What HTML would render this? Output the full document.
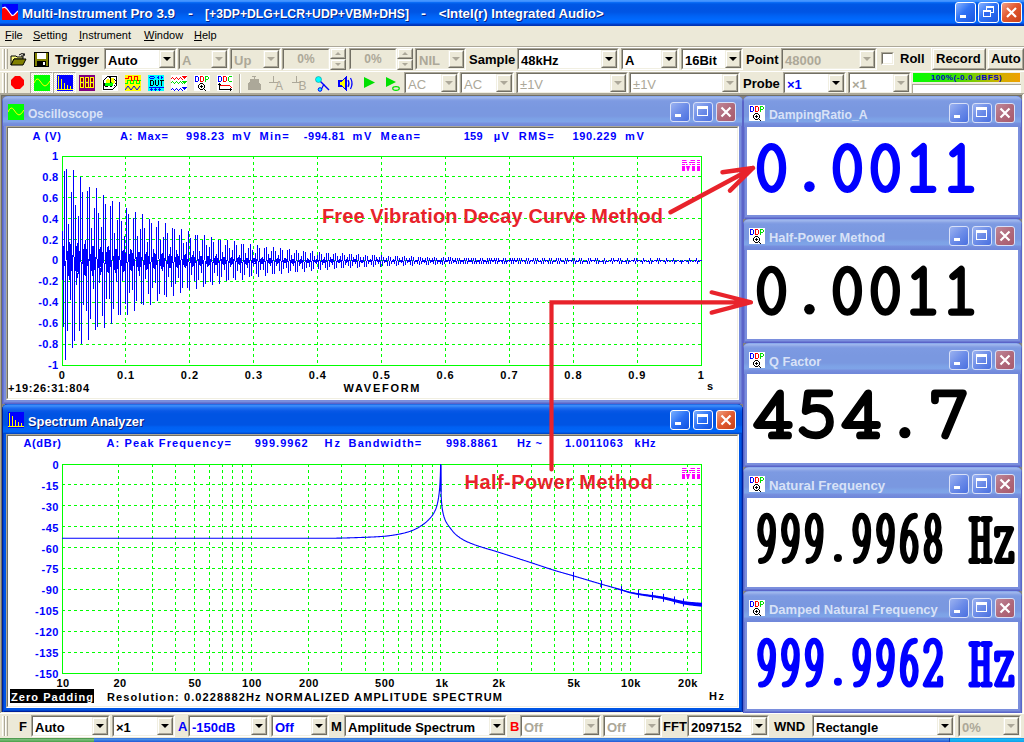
<!DOCTYPE html>
<html><head><meta charset="utf-8"><style>
html,body{margin:0;padding:0;width:1024px;height:742px;overflow:hidden;background:#ECE9D8;font-family:"Liberation Sans",sans-serif;}
</style></head><body><div style="position:relative;width:1024px;height:742px;overflow:hidden;">
<div style="position:absolute;left:0px;top:0px;width:1024px;height:26px;background:linear-gradient(to bottom,#4A9BFF 0px,#3A8CFF 1.5px,#0A6CF5 2.5px,#0058E6 4px,#0054E3 8px,#0055E4 12px,#0062F4 16px,#006AFF 20px,#0066FA 23px,#0040D0 24px,#0030A8 26px);"></div>
<svg style="position:absolute;left:2px;top:4px" width="16" height="16" viewBox="0 0 16 16"><rect width="16" height="16" fill="#0000FF"/><path d="M0 16V4L3 3.2L5 5L8 9L10 11.5L12 11L16 7V16Z" fill="#FF0000"/><path d="M0 4L3 3.2L5 5L8 9L10 11.5L12 11L16 7" stroke="#fff" stroke-width="1.2" fill="none"/></svg>
<svg style="position:absolute;left:0;top:0;overflow:visible" width="1" height="1"><text x="23" y="18.5" font-family="Liberation Sans" font-weight="bold" font-size="13.5" fill="#0A1E80" textLength="153" lengthAdjust="spacingAndGlyphs">Multi-Instrument Pro 3.9</text><text x="22" y="17.5" font-family="Liberation Sans" font-weight="bold" font-size="13.5" fill="#fff" textLength="153" lengthAdjust="spacingAndGlyphs">Multi-Instrument Pro 3.9</text></svg>
<svg style="position:absolute;left:0;top:0;overflow:visible" width="1" height="1"><text x="189" y="18.5" font-family="Liberation Sans" font-weight="bold" font-size="13.5" fill="#0A1E80" textLength="5" lengthAdjust="spacingAndGlyphs">-</text><text x="188" y="17.5" font-family="Liberation Sans" font-weight="bold" font-size="13.5" fill="#fff" textLength="5" lengthAdjust="spacingAndGlyphs">-</text></svg>
<svg style="position:absolute;left:0;top:0;overflow:visible" width="1" height="1"><text x="206" y="18.5" font-family="Liberation Sans" font-weight="bold" font-size="13.5" fill="#0A1E80" textLength="204" lengthAdjust="spacingAndGlyphs">[+3DP+DLG+LCR+UDP+VBM+DHS]</text><text x="205" y="17.5" font-family="Liberation Sans" font-weight="bold" font-size="13.5" fill="#fff" textLength="204" lengthAdjust="spacingAndGlyphs">[+3DP+DLG+LCR+UDP+VBM+DHS]</text></svg>
<svg style="position:absolute;left:0;top:0;overflow:visible" width="1" height="1"><text x="422" y="18.5" font-family="Liberation Sans" font-weight="bold" font-size="13.5" fill="#0A1E80" textLength="5" lengthAdjust="spacingAndGlyphs">-</text><text x="421" y="17.5" font-family="Liberation Sans" font-weight="bold" font-size="13.5" fill="#fff" textLength="5" lengthAdjust="spacingAndGlyphs">-</text></svg>
<svg style="position:absolute;left:0;top:0;overflow:visible" width="1" height="1"><text x="439.7" y="18.5" font-family="Liberation Sans" font-weight="bold" font-size="13.5" fill="#0A1E80" textLength="165" lengthAdjust="spacingAndGlyphs">&lt;Intel(r) Integrated Audio&gt;</text><text x="438.7" y="17.5" font-family="Liberation Sans" font-weight="bold" font-size="13.5" fill="#fff" textLength="165" lengthAdjust="spacingAndGlyphs">&lt;Intel(r) Integrated Audio&gt;</text></svg>
<div style="position:absolute;left:955px;top:2px;width:21px;height:21px;background:linear-gradient(135deg,#8ab4ff 0%,#2f73f5 45%,#1a56e0 100%);border:1px solid #fff;border-radius:3px;box-sizing:border-box;"></div><div style="position:absolute;left:960px;top:15px;width:6px;height:3px;background:#fff;"></div>
<div style="position:absolute;left:978px;top:2px;width:21px;height:21px;background:linear-gradient(135deg,#8ab4ff 0%,#2f73f5 45%,#1a56e0 100%);border:1px solid #fff;border-radius:3px;box-sizing:border-box;"></div><div style="position:absolute;left:986px;top:6px;width:8px;height:7px;border:1px solid #fff;border-top-width:2px;box-sizing:border-box;"></div><div style="position:absolute;left:983px;top:10px;width:8px;height:7px;border:1px solid #fff;border-top-width:2px;box-sizing:border-box;background:#2f6af0;"></div>
<div style="position:absolute;left:1001px;top:2px;width:21px;height:21px;background:linear-gradient(135deg,#f0a08a 0%,#e2582e 45%,#c8401a 100%);border:1px solid #fff;border-radius:3px;box-sizing:border-box;"></div><svg style="position:absolute;left:1001px;top:2px" width="21" height="21"><path d="M6 6L15 15M15 6L6 15" stroke="#fff" stroke-width="2.2"/></svg>
<div style="position:absolute;left:0px;top:26px;width:1024px;height:20px;background:#ECE9D8;"></div>
<div style="position:absolute;left:5px;top:29px;white-space:pre;font:11px 'Liberation Sans',sans-serif;color:#000;line-height:13px;"><u>F</u>ile</div>
<div style="position:absolute;left:33px;top:29px;white-space:pre;font:11px 'Liberation Sans',sans-serif;color:#000;line-height:13px;"><u>S</u>etting</div>
<div style="position:absolute;left:79px;top:29px;white-space:pre;font:11px 'Liberation Sans',sans-serif;color:#000;line-height:13px;"><u>I</u>nstrument</div>
<div style="position:absolute;left:144px;top:29px;white-space:pre;font:11px 'Liberation Sans',sans-serif;color:#000;line-height:13px;"><u>W</u>indow</div>
<div style="position:absolute;left:194px;top:29px;white-space:pre;font:11px 'Liberation Sans',sans-serif;color:#000;line-height:13px;"><u>H</u>elp</div>
<div style="position:absolute;left:0px;top:46px;width:1024px;height:1px;background:#ACA899;"></div>
<div style="position:absolute;left:0px;top:47px;width:1024px;height:1px;background:#fff;"></div>
<div style="position:absolute;left:0px;top:48px;width:1024px;height:23px;background:#ECE9D8;"></div>
<div style="position:absolute;left:2px;top:49px;width:3px;height:20px;border-left:1px solid #fff;border-right:1px solid #ACA899;box-sizing:border-box;"></div><div style="position:absolute;left:5px;top:49px;width:3px;height:20px;border-left:1px solid #fff;border-right:1px solid #ACA899;box-sizing:border-box;"></div>
<svg style="position:absolute;left:10px;top:52px" width="17" height="15" viewBox="0 0 17 15"><path d="M1 4h5l1 1h6v2H4L1 13Z" fill="#FFFF80" stroke="#000" stroke-width="1"/><path d="M1 13L4 7h12l-3 6Z" fill="#808000" stroke="#000" stroke-width="1"/><path d="M9 3Q12 0 15 3" stroke="#000" fill="none"/><path d="M14 1v3h-3" stroke="#000" fill="none"/></svg>
<svg style="position:absolute;left:34px;top:52px" width="15" height="15" viewBox="0 0 15 15"><rect x="0.5" y="0.5" width="14" height="14" fill="#808000" stroke="#000"/><rect x="3" y="1" width="9" height="6" fill="#fff"/><rect x="3" y="9" width="9" height="5" fill="#000"/><rect x="9" y="10" width="2" height="3" fill="#fff"/></svg>
<div style="position:absolute;left:55px;top:52px;white-space:pre;font:bold 13px 'Liberation Sans',sans-serif;color:#000;line-height:15px;">Trigger</div>
<div style="position:absolute;left:104px;top:48px;width:73px;height:22px;background:#fff;border-top:1px solid #ACA899;border-left:1px solid #ACA899;border-right:1px solid #fff;border-bottom:1px solid #fff;box-sizing:border-box;"></div><div style="position:absolute;left:105px;top:49px;width:71px;height:20px;border-top:1px solid #716F64;border-left:1px solid #716F64;border-right:1px solid #F1EFE2;border-bottom:1px solid #F1EFE2;box-sizing:border-box;"></div><div style="position:absolute;left:159px;top:50px;width:16px;height:18px;background:#ECE9D8;border-top:1px solid #F1EFE2;border-left:1px solid #F1EFE2;border-right:1px solid #716F64;border-bottom:1px solid #716F64;box-sizing:border-box;"></div><div style="position:absolute;left:160px;top:51px;width:14px;height:16px;border-top:1px solid #fff;border-left:1px solid #fff;border-right:1px solid #ACA899;border-bottom:1px solid #ACA899;box-sizing:border-box;"></div><div style="position:absolute;left:163px;top:57px;width:0;height:0;border-left:4px solid transparent;border-right:4px solid transparent;border-top:4px solid #000;"></div><div style="position:absolute;left:108px;top:53px;white-space:pre;font:bold 13px 'Liberation Sans',sans-serif;color:#000;line-height:15px;">Auto</div>
<div style="position:absolute;left:178px;top:48px;width:51px;height:22px;background:#ECE9D8;border-top:1px solid #ACA899;border-left:1px solid #ACA899;border-right:1px solid #fff;border-bottom:1px solid #fff;box-sizing:border-box;"></div><div style="position:absolute;left:179px;top:49px;width:49px;height:20px;border-top:1px solid #716F64;border-left:1px solid #716F64;border-right:1px solid #F1EFE2;border-bottom:1px solid #F1EFE2;box-sizing:border-box;"></div><div style="position:absolute;left:211px;top:50px;width:16px;height:18px;background:#ECE9D8;border-top:1px solid #F1EFE2;border-left:1px solid #F1EFE2;border-right:1px solid #716F64;border-bottom:1px solid #716F64;box-sizing:border-box;"></div><div style="position:absolute;left:212px;top:51px;width:14px;height:16px;border-top:1px solid #fff;border-left:1px solid #fff;border-right:1px solid #ACA899;border-bottom:1px solid #ACA899;box-sizing:border-box;"></div><div style="position:absolute;left:215px;top:57px;width:0;height:0;border-left:4px solid transparent;border-right:4px solid transparent;border-top:4px solid #ACA899;"></div><div style="position:absolute;left:182px;top:53px;white-space:pre;font:bold 13px 'Liberation Sans',sans-serif;color:#ACA899;line-height:15px;">A</div>
<div style="position:absolute;left:230px;top:48px;width:51px;height:22px;background:#ECE9D8;border-top:1px solid #ACA899;border-left:1px solid #ACA899;border-right:1px solid #fff;border-bottom:1px solid #fff;box-sizing:border-box;"></div><div style="position:absolute;left:231px;top:49px;width:49px;height:20px;border-top:1px solid #716F64;border-left:1px solid #716F64;border-right:1px solid #F1EFE2;border-bottom:1px solid #F1EFE2;box-sizing:border-box;"></div><div style="position:absolute;left:263px;top:50px;width:16px;height:18px;background:#ECE9D8;border-top:1px solid #F1EFE2;border-left:1px solid #F1EFE2;border-right:1px solid #716F64;border-bottom:1px solid #716F64;box-sizing:border-box;"></div><div style="position:absolute;left:264px;top:51px;width:14px;height:16px;border-top:1px solid #fff;border-left:1px solid #fff;border-right:1px solid #ACA899;border-bottom:1px solid #ACA899;box-sizing:border-box;"></div><div style="position:absolute;left:267px;top:57px;width:0;height:0;border-left:4px solid transparent;border-right:4px solid transparent;border-top:4px solid #ACA899;"></div><div style="position:absolute;left:234px;top:53px;white-space:pre;font:bold 13px 'Liberation Sans',sans-serif;color:#ACA899;line-height:15px;">Up</div>
<div style="position:absolute;left:282px;top:48px;width:48px;height:22px;background:#ECE9D8;border-top:1px solid #ACA899;border-left:1px solid #ACA899;border-right:1px solid #fff;border-bottom:1px solid #fff;box-sizing:border-box;"></div><div style="position:absolute;left:283px;top:49px;width:46px;height:20px;border-top:1px solid #716F64;border-left:1px solid #716F64;border-right:1px solid #F1EFE2;border-bottom:1px solid #F1EFE2;box-sizing:border-box;"></div><div style="position:absolute;left:286px;top:52px;white-space:pre;font:bold 12px 'Liberation Sans',sans-serif;color:#ACA899;line-height:14px;width:40px;text-align:center;">0%</div><div style="position:absolute;left:330px;top:48px;width:16px;height:11px;background:#ECE9D8;border-top:1px solid #F1EFE2;border-left:1px solid #F1EFE2;border-right:1px solid #716F64;border-bottom:1px solid #716F64;box-sizing:border-box;"></div><div style="position:absolute;left:331px;top:49px;width:14px;height:9px;border-top:1px solid #fff;border-left:1px solid #fff;border-right:1px solid #ACA899;border-bottom:1px solid #ACA899;box-sizing:border-box;"></div><div style="position:absolute;left:330px;top:59px;width:16px;height:11px;background:#ECE9D8;border-top:1px solid #F1EFE2;border-left:1px solid #F1EFE2;border-right:1px solid #716F64;border-bottom:1px solid #716F64;box-sizing:border-box;"></div><div style="position:absolute;left:331px;top:60px;width:14px;height:9px;border-top:1px solid #fff;border-left:1px solid #fff;border-right:1px solid #ACA899;border-bottom:1px solid #ACA899;box-sizing:border-box;"></div><div style="position:absolute;left:335px;top:52px;width:0;height:0;border-left:3px solid transparent;border-right:3px solid transparent;border-bottom:3px solid #ACA899;"></div><div style="position:absolute;left:335px;top:63px;width:0px;height:0px;border-left:3px solid transparent;border-right:3px solid transparent;border-top:3px solid #ACA899;"></div>
<div style="position:absolute;left:349px;top:48px;width:48px;height:22px;background:#ECE9D8;border-top:1px solid #ACA899;border-left:1px solid #ACA899;border-right:1px solid #fff;border-bottom:1px solid #fff;box-sizing:border-box;"></div><div style="position:absolute;left:350px;top:49px;width:46px;height:20px;border-top:1px solid #716F64;border-left:1px solid #716F64;border-right:1px solid #F1EFE2;border-bottom:1px solid #F1EFE2;box-sizing:border-box;"></div><div style="position:absolute;left:353px;top:52px;white-space:pre;font:bold 12px 'Liberation Sans',sans-serif;color:#ACA899;line-height:14px;width:40px;text-align:center;">0%</div><div style="position:absolute;left:397px;top:48px;width:16px;height:11px;background:#ECE9D8;border-top:1px solid #F1EFE2;border-left:1px solid #F1EFE2;border-right:1px solid #716F64;border-bottom:1px solid #716F64;box-sizing:border-box;"></div><div style="position:absolute;left:398px;top:49px;width:14px;height:9px;border-top:1px solid #fff;border-left:1px solid #fff;border-right:1px solid #ACA899;border-bottom:1px solid #ACA899;box-sizing:border-box;"></div><div style="position:absolute;left:397px;top:59px;width:16px;height:11px;background:#ECE9D8;border-top:1px solid #F1EFE2;border-left:1px solid #F1EFE2;border-right:1px solid #716F64;border-bottom:1px solid #716F64;box-sizing:border-box;"></div><div style="position:absolute;left:398px;top:60px;width:14px;height:9px;border-top:1px solid #fff;border-left:1px solid #fff;border-right:1px solid #ACA899;border-bottom:1px solid #ACA899;box-sizing:border-box;"></div><div style="position:absolute;left:402px;top:52px;width:0;height:0;border-left:3px solid transparent;border-right:3px solid transparent;border-bottom:3px solid #ACA899;"></div><div style="position:absolute;left:402px;top:63px;width:0px;height:0px;border-left:3px solid transparent;border-right:3px solid transparent;border-top:3px solid #ACA899;"></div>
<div style="position:absolute;left:415px;top:48px;width:51px;height:22px;background:#ECE9D8;border-top:1px solid #ACA899;border-left:1px solid #ACA899;border-right:1px solid #fff;border-bottom:1px solid #fff;box-sizing:border-box;"></div><div style="position:absolute;left:416px;top:49px;width:49px;height:20px;border-top:1px solid #716F64;border-left:1px solid #716F64;border-right:1px solid #F1EFE2;border-bottom:1px solid #F1EFE2;box-sizing:border-box;"></div><div style="position:absolute;left:448px;top:50px;width:16px;height:18px;background:#ECE9D8;border-top:1px solid #F1EFE2;border-left:1px solid #F1EFE2;border-right:1px solid #716F64;border-bottom:1px solid #716F64;box-sizing:border-box;"></div><div style="position:absolute;left:449px;top:51px;width:14px;height:16px;border-top:1px solid #fff;border-left:1px solid #fff;border-right:1px solid #ACA899;border-bottom:1px solid #ACA899;box-sizing:border-box;"></div><div style="position:absolute;left:452px;top:57px;width:0;height:0;border-left:4px solid transparent;border-right:4px solid transparent;border-top:4px solid #ACA899;"></div><div style="position:absolute;left:419px;top:53px;white-space:pre;font:bold 13px 'Liberation Sans',sans-serif;color:#ACA899;line-height:15px;">NIL</div>
<div style="position:absolute;left:469px;top:52px;white-space:pre;font:bold 13px 'Liberation Sans',sans-serif;color:#000;line-height:15px;">Sample</div>
<div style="position:absolute;left:517px;top:48px;width:102px;height:22px;background:#fff;border-top:1px solid #ACA899;border-left:1px solid #ACA899;border-right:1px solid #fff;border-bottom:1px solid #fff;box-sizing:border-box;"></div><div style="position:absolute;left:518px;top:49px;width:100px;height:20px;border-top:1px solid #716F64;border-left:1px solid #716F64;border-right:1px solid #F1EFE2;border-bottom:1px solid #F1EFE2;box-sizing:border-box;"></div><div style="position:absolute;left:601px;top:50px;width:16px;height:18px;background:#ECE9D8;border-top:1px solid #F1EFE2;border-left:1px solid #F1EFE2;border-right:1px solid #716F64;border-bottom:1px solid #716F64;box-sizing:border-box;"></div><div style="position:absolute;left:602px;top:51px;width:14px;height:16px;border-top:1px solid #fff;border-left:1px solid #fff;border-right:1px solid #ACA899;border-bottom:1px solid #ACA899;box-sizing:border-box;"></div><div style="position:absolute;left:605px;top:57px;width:0;height:0;border-left:4px solid transparent;border-right:4px solid transparent;border-top:4px solid #000;"></div><div style="position:absolute;left:521px;top:53px;white-space:pre;font:bold 13px 'Liberation Sans',sans-serif;color:#000;line-height:15px;">48kHz</div>
<div style="position:absolute;left:621px;top:48px;width:58px;height:22px;background:#fff;border-top:1px solid #ACA899;border-left:1px solid #ACA899;border-right:1px solid #fff;border-bottom:1px solid #fff;box-sizing:border-box;"></div><div style="position:absolute;left:622px;top:49px;width:56px;height:20px;border-top:1px solid #716F64;border-left:1px solid #716F64;border-right:1px solid #F1EFE2;border-bottom:1px solid #F1EFE2;box-sizing:border-box;"></div><div style="position:absolute;left:661px;top:50px;width:16px;height:18px;background:#ECE9D8;border-top:1px solid #F1EFE2;border-left:1px solid #F1EFE2;border-right:1px solid #716F64;border-bottom:1px solid #716F64;box-sizing:border-box;"></div><div style="position:absolute;left:662px;top:51px;width:14px;height:16px;border-top:1px solid #fff;border-left:1px solid #fff;border-right:1px solid #ACA899;border-bottom:1px solid #ACA899;box-sizing:border-box;"></div><div style="position:absolute;left:665px;top:57px;width:0;height:0;border-left:4px solid transparent;border-right:4px solid transparent;border-top:4px solid #000;"></div><div style="position:absolute;left:625px;top:53px;white-space:pre;font:bold 13px 'Liberation Sans',sans-serif;color:#000;line-height:15px;">A</div>
<div style="position:absolute;left:681px;top:48px;width:62px;height:22px;background:#fff;border-top:1px solid #ACA899;border-left:1px solid #ACA899;border-right:1px solid #fff;border-bottom:1px solid #fff;box-sizing:border-box;"></div><div style="position:absolute;left:682px;top:49px;width:60px;height:20px;border-top:1px solid #716F64;border-left:1px solid #716F64;border-right:1px solid #F1EFE2;border-bottom:1px solid #F1EFE2;box-sizing:border-box;"></div><div style="position:absolute;left:725px;top:50px;width:16px;height:18px;background:#ECE9D8;border-top:1px solid #F1EFE2;border-left:1px solid #F1EFE2;border-right:1px solid #716F64;border-bottom:1px solid #716F64;box-sizing:border-box;"></div><div style="position:absolute;left:726px;top:51px;width:14px;height:16px;border-top:1px solid #fff;border-left:1px solid #fff;border-right:1px solid #ACA899;border-bottom:1px solid #ACA899;box-sizing:border-box;"></div><div style="position:absolute;left:729px;top:57px;width:0;height:0;border-left:4px solid transparent;border-right:4px solid transparent;border-top:4px solid #000;"></div><div style="position:absolute;left:685px;top:53px;white-space:pre;font:bold 13px 'Liberation Sans',sans-serif;color:#000;line-height:15px;">16Bit</div>
<div style="position:absolute;left:746px;top:52px;white-space:pre;font:bold 13px 'Liberation Sans',sans-serif;color:#000;line-height:15px;">Point</div>
<div style="position:absolute;left:781px;top:48px;width:96px;height:22px;background:#ECE9D8;border-top:1px solid #ACA899;border-left:1px solid #ACA899;border-right:1px solid #fff;border-bottom:1px solid #fff;box-sizing:border-box;"></div><div style="position:absolute;left:782px;top:49px;width:94px;height:20px;border-top:1px solid #716F64;border-left:1px solid #716F64;border-right:1px solid #F1EFE2;border-bottom:1px solid #F1EFE2;box-sizing:border-box;"></div><div style="position:absolute;left:859px;top:50px;width:16px;height:18px;background:#ECE9D8;border-top:1px solid #F1EFE2;border-left:1px solid #F1EFE2;border-right:1px solid #716F64;border-bottom:1px solid #716F64;box-sizing:border-box;"></div><div style="position:absolute;left:860px;top:51px;width:14px;height:16px;border-top:1px solid #fff;border-left:1px solid #fff;border-right:1px solid #ACA899;border-bottom:1px solid #ACA899;box-sizing:border-box;"></div><div style="position:absolute;left:863px;top:57px;width:0;height:0;border-left:4px solid transparent;border-right:4px solid transparent;border-top:4px solid #ACA899;"></div><div style="position:absolute;left:785px;top:53px;white-space:pre;font:bold 13px 'Liberation Sans',sans-serif;color:#ACA899;line-height:15px;">48000</div>
<div style="position:absolute;left:879px;top:48px;width:53px;height:22px;border-right:1px solid #fff;box-sizing:border-box;"></div>
<div style="position:absolute;left:881px;top:52px;width:13px;height:13px;background:#fff;border-top:1px solid #ACA899;border-left:1px solid #ACA899;border-right:1px solid #fff;border-bottom:1px solid #fff;box-sizing:border-box;"></div><div style="position:absolute;left:882px;top:53px;width:11px;height:11px;border-top:1px solid #716F64;border-left:1px solid #716F64;border-right:1px solid #F1EFE2;border-bottom:1px solid #F1EFE2;box-sizing:border-box;"></div>
<div style="position:absolute;left:900px;top:51px;white-space:pre;font:bold 13px 'Liberation Sans',sans-serif;color:#000;line-height:15px;">Roll</div>
<div style="position:absolute;left:932px;top:48px;width:54px;height:22px;background:#ECE9D8;border-top:1px solid #F1EFE2;border-left:1px solid #F1EFE2;border-right:1px solid #716F64;border-bottom:1px solid #716F64;box-sizing:border-box;"></div><div style="position:absolute;left:933px;top:49px;width:52px;height:20px;border-top:1px solid #fff;border-left:1px solid #fff;border-right:1px solid #ACA899;border-bottom:1px solid #ACA899;box-sizing:border-box;"></div>
<div style="position:absolute;left:936px;top:51px;white-space:pre;font:bold 13px 'Liberation Sans',sans-serif;color:#000;line-height:15px;">Record</div>
<div style="position:absolute;left:987px;top:48px;width:37px;height:22px;background:#ECE9D8;border-top:1px solid #F1EFE2;border-left:1px solid #F1EFE2;border-right:1px solid #716F64;border-bottom:1px solid #716F64;box-sizing:border-box;"></div><div style="position:absolute;left:988px;top:49px;width:35px;height:20px;border-top:1px solid #fff;border-left:1px solid #fff;border-right:1px solid #ACA899;border-bottom:1px solid #ACA899;box-sizing:border-box;"></div>
<div style="position:absolute;left:991px;top:51px;white-space:pre;font:bold 13px 'Liberation Sans',sans-serif;color:#000;line-height:15px;">Auto</div>
<div style="position:absolute;left:0px;top:71px;width:1024px;height:23px;background:#ECE9D8;border-top:1px solid #fff;box-sizing:border-box;"></div>
<div style="position:absolute;left:2px;top:73px;width:3px;height:20px;border-left:1px solid #fff;border-right:1px solid #ACA899;box-sizing:border-box;"></div><div style="position:absolute;left:5px;top:73px;width:3px;height:20px;border-left:1px solid #fff;border-right:1px solid #ACA899;box-sizing:border-box;"></div>
<svg style="position:absolute;left:11px;top:76px;" width="13" height="13" viewBox="0 0 13 13" shape-rendering="crispEdges"><path d="M4 0h5l4 4v5l-4 4H4L0 9V4Z" fill="#FF0000" shape-rendering="geometricPrecision"/></svg>
<div style="position:absolute;left:30px;top:72px;width:23px;height:22px;background:repeating-conic-gradient(#fff 0 25%,#ECE9D8 0 50%) 0 0/2px 2px;border-top:1px solid #ACA899;border-left:1px solid #ACA899;border-right:1px solid #fff;border-bottom:1px solid #fff;box-sizing:border-box;"></div>
<div style="position:absolute;left:53px;top:72px;width:23px;height:22px;background:repeating-conic-gradient(#fff 0 25%,#ECE9D8 0 50%) 0 0/2px 2px;border-top:1px solid #ACA899;border-left:1px solid #ACA899;border-right:1px solid #fff;border-bottom:1px solid #fff;box-sizing:border-box;"></div>
<svg style="position:absolute;left:34px;top:75px;" width="16" height="16" viewBox="0 0 16 16" shape-rendering="crispEdges"><rect width="16" height="16" fill="#00FF00"/><path d="M0 8Q3 1 6 6T11 11T16 6" stroke="#FFFF00" fill="none" stroke-width="1" shape-rendering="geometricPrecision"/></svg>
<svg style="position:absolute;left:57px;top:75px;" width="16" height="16" viewBox="0 0 16 16" shape-rendering="crispEdges"><rect width="16" height="16" fill="#0000FF"/><g fill="#FFFF00"><rect x="1" y="1" width="1" height="14"/><rect x="4" y="4" width="1" height="11"/><rect x="7" y="8" width="1" height="7"/><rect x="10" y="10" width="1" height="5"/><rect x="13" y="11" width="1" height="4"/><rect x="0" y="14" width="16" height="1"/></g></svg>
<svg style="position:absolute;left:79px;top:75px;" width="16" height="16" viewBox="0 0 16 16" shape-rendering="crispEdges"><rect width="16" height="16" fill="#800080"/><g fill="#8B0000"><rect x="2" y="3" width="2" height="3"/><rect x="2" y="9" width="2" height="3"/><rect x="7" y="3" width="2" height="3"/><rect x="7" y="9" width="2" height="3"/><rect x="12" y="3" width="2" height="3"/><rect x="12" y="9" width="2" height="3"/></g><g fill="none" stroke="#FFFF00" stroke-width="1"><path d="M1.5 2.5h3v10h-3zM1.5 7.5h3M6.5 2.5h3v10h-3zM6.5 7.5h3M11.5 2.5h3v10h-3zM11.5 7.5h3"/></g><rect x="10" y="12" width="1" height="1" fill="#FFFF00"/></svg>
<svg style="position:absolute;left:102px;top:75px;" width="16" height="16" viewBox="0 0 16 16" shape-rendering="crispEdges"><rect width="16" height="16" fill="#fff"/><rect x="4" y="5" width="4" height="3" fill="#FFFF00"/><rect x="5" y="4" width="2" height="1" fill="#FFFF00"/><rect x="9" y="3" width="3" height="5" fill="#FFFF00"/><rect x="12" y="6" width="1" height="2" fill="#FFFF00"/><rect x="10" y="8" width="2" height="1" fill="#FFFF00"/><rect x="3" y="8" width="8" height="3" fill="#00FF00"/><rect x="8" y="7" width="2" height="1" fill="#00FF00"/><rect x="5" y="1" width="10" height="1" fill="#000"/><rect x="14" y="1" width="1" height="10" fill="#000"/><rect x="13" y="11" width="1" height="1" fill="#000"/><rect x="12" y="12" width="1" height="1" fill="#000"/><rect x="11" y="13" width="1" height="1" fill="#000"/><rect x="1" y="14" width="10" height="1" fill="#000"/><rect x="1" y="5" width="1" height="10" fill="#000"/><rect x="2" y="4" width="1" height="1" fill="#000"/><rect x="3" y="3" width="1" height="1" fill="#000"/><rect x="4" y="2" width="1" height="1" fill="#000"/><rect x="8" y="2" width="1" height="6" fill="#000"/><rect x="7" y="2" width="1" height="1" fill="#000"/><rect x="12" y="4" width="1" height="1" fill="#000"/><rect x="13" y="5" width="1" height="1" fill="#000"/><rect x="13" y="8" width="1" height="1" fill="#000"/><rect x="12" y="10" width="1" height="1" fill="#000"/><rect x="3" y="11" width="3" height="1" fill="#000"/><rect x="8" y="11" width="2" height="1" fill="#000"/><rect x="2" y="8" width="1" height="3" fill="#000"/></svg>
<svg style="position:absolute;left:125px;top:75px;" width="16" height="16" viewBox="0 0 16 16" shape-rendering="crispEdges"><rect width="16" height="16" fill="#FFFF00"/><path d="M0 3.5h3v-2h3v4h3v-4h3v4h4" stroke="#FF0000" fill="none"/><path d="M0 8.5h2v-3h3v3h3v-3h3v3h3v-3h2" stroke="#00FF00" fill="none"/><path d="M0 15L3 11L6 15L9 11L12 15L15 11" stroke="#0000FF" fill="none" shape-rendering="geometricPrecision"/></svg>
<svg style="position:absolute;left:148px;top:75px;" width="16" height="16" viewBox="0 0 16 16" shape-rendering="crispEdges"><rect width="16" height="16" fill="#00FFFF"/><g shape-rendering="crispEdges" fill="#0000FF"><path d="M2 1h4v1H2zM1 2h1v1H1zM6 2h1v1H6zM2 3h4v1H2zM10 1h1v3h-1zM9 2h1v1H9zM13 1h1v3h-1zM14 2h1v1h-1zM1 12h15v1H1zM3 13h1v3H3zM7 13h1v3H7zM11 13h1v3h-1zM2 14h1v1H2zM4 14h1v1H4zM6 14h1v1H6zM8 14h1v1H8zM10 14h1v1h-1zM12 14h1v1h-1z"/></g><g shape-rendering="crispEdges" fill="#000"><path d="M2 5h3v1H2zM2 10h3v1H2zM2 5h1v6H2zM5 6h1v4H5zM7 5h1v5H7zM10 5h1v5h-1zM8 10h2v1H8zM12 5h4v1h-4zM13 6h1v5h-1z"/></g></svg>
<svg style="position:absolute;left:171px;top:75px;" width="16" height="16" viewBox="0 0 16 16" shape-rendering="crispEdges"><rect width="16" height="16" fill="#fff"/><g shape-rendering="crispEdges"><path d="M0 3h1v1H0zM1 2h1v1H1zM2 3h1v1H2zM3 4h1v1H3zM4 3h1v1H4zM5 2h1v1H5zM6 3h1v1H6zM7 4h1v1H7zM8 3h1v1H8zM9 2h1v1H9zM10 3h1v1h-1zM11 4h1v1h-1zM11 1h5v1h-5zM12 2h3v1h-3zM13 3h1v1h-1z" fill="#FF0000"/><path d="M0 7h1v1H0zM1 6h1v1H1zM2 7h1v1H2zM3 8h1v1H3zM4 7h1v1H4zM5 6h1v1H5zM6 7h1v1H6zM7 8h1v1H7zM8 7h1v1H8zM9 6h1v1H9zM10 7h1v1h-1zM11 8h1v1h-1zM11 6h5v1h-5zM12 7h3v1h-3zM13 8h1v1h-1z" fill="#00E000"/><path transform="translate(0,1)" d="M0 13h1v1H0zM1 12h1v1H1zM2 13h1v1H2zM3 14h1v1H3zM4 13h1v1H4zM5 12h1v1H5zM6 13h1v1H6zM7 14h1v1H7zM8 13h1v1H8zM9 12h1v1H9zM10 13h1v1h-1zM11 14h1v1h-1zM11 11h5v1h-5zM12 12h3v1h-3zM13 13h1v1h-1z" fill="#0000FF"/></g></svg>
<svg style="position:absolute;left:194px;top:75px;" width="16" height="16" viewBox="0 0 16 16" shape-rendering="crispEdges"><rect width="16" height="16" fill="#fff"/><g shape-rendering="crispEdges"><path d="M1 1h3v1H1zM1 6h3v1H1zM1 1h1v6H1zM4 2h1v4H4z" fill="#0000FF"/><path d="M6 1h3v1H6zM6 6h3v1H6zM6 1h1v6H6zM9 2h1v4H9z" fill="#FF0000"/><path d="M11 1h3v1h-3zM11 4h3v1h-3zM11 1h1v6h-1zM14 2h1v2h-1z" fill="#00E000"/><path d="M6 8h3v1H6zM6 14h3v1H6zM5 9h1v1H5zM9 9h1v1H9zM5 13h1v1H5zM9 13h1v1H9zM4 10h1v3H4zM10 10h1v3h-1zM7 10h1v3H7zM6 11h3v1H6zM10 14h1v1h-1zM11 15h1v1h-1z" fill="#000"/></g></svg>
<svg style="position:absolute;left:217px;top:75px;" width="16" height="16" viewBox="0 0 16 16" shape-rendering="crispEdges"><rect width="16" height="16" fill="#fff"/><g shape-rendering="crispEdges"><path d="M1 1h3v1H1zM1 6h3v1H1zM1 1h1v6H1zM4 2h1v4H4z" fill="#0000FF"/><path d="M6 1h3v1H6zM6 6h3v1H6zM6 1h1v6H6zM9 2h1v4H9z" fill="#FF0000"/><path d="M12 1h3v1h-3zM12 6h3v1h-3zM11 2h1v4h-1z" fill="#00E000"/><path d="M2 8h1v7H2zM1 9h3v1H1zM2 14h13v1H2zM13 13h1v3h-1z" fill="#000"/><path d="M3 10h10v1H3zM13 11h1v1h-1zM14 12h1v1h-1z" fill="#FF0000"/></g></svg>
<div style="position:absolute;left:239px;top:74px;width:2px;height:19px;border-left:1px solid #ACA899;border-right:1px solid #fff;box-sizing:border-box;"></div>
<svg style="position:absolute;left:247px;top:75px;" width="14" height="16" viewBox="0 0 14 16" shape-rendering="crispEdges"><path d="M5 1h4M7 1v3M3 4h8v3l2 2v5H1V9l2-2Z" fill="#ACA899" stroke="#ACA899"/></svg>
<svg style="position:absolute;left:268px;top:75px;" width="17" height="16" viewBox="0 0 17 16" shape-rendering="crispEdges"><path d="M5.5 1v6M1 7.5h9" stroke="#ACA899" stroke-width="1.6"/><text x="7" y="15" font-family="Liberation Sans" font-size="12" fill="#ACA899">A</text></svg>
<svg style="position:absolute;left:291px;top:75px;" width="17" height="16" viewBox="0 0 17 16" shape-rendering="crispEdges"><path d="M5.5 1v6M1 7.5h9" stroke="#ACA899" stroke-width="1.6"/><text x="7.5" y="15" font-family="Liberation Sans" font-size="12" fill="#ACA899">B</text></svg>
<svg style="position:absolute;left:315px;top:76px;" width="16" height="16" viewBox="0 0 16 16" shape-rendering="crispEdges"><g shape-rendering="geometricPrecision"><path d="M3 3L14 14" stroke="#0000FF" stroke-width="1.4"/><path d="M9 8L6 14" stroke="#0000FF" stroke-width="1.2"/><circle cx="3.5" cy="3.5" r="3" fill="#00FFFF" stroke="#008080" stroke-width=".5"/><circle cx="5" cy="13.5" r="1.8" fill="#00FFFF" stroke="#0000FF"/></g></svg>
<svg style="position:absolute;left:338px;top:75px;" width="17" height="17" viewBox="0 0 17 17" shape-rendering="crispEdges"><path d="M1 6h3l4-4v13l-4-4H1Z" fill="#FFFF00" stroke="#0000FF" stroke-width="1.2"/><g fill="none" stroke="#0000FF" stroke-width="1.2" shape-rendering="geometricPrecision"><path d="M10 5Q12 8.5 10 12"/><path d="M12.5 3Q15.5 8.5 12.5 14"/></g></svg>
<svg style="position:absolute;left:364px;top:77px;" width="11" height="11" viewBox="0 0 11 11" shape-rendering="crispEdges"><path d="M0 0L11 5.5L0 11Z" fill="#00E000" shape-rendering="geometricPrecision"/></svg>
<svg style="position:absolute;left:386px;top:77px;" width="14" height="14" viewBox="0 0 14 14" shape-rendering="crispEdges"><path d="M0 0L10 5L0 10Z" fill="#00E000" shape-rendering="geometricPrecision"/><ellipse cx="10" cy="11.5" rx="3.3" ry="1.8" fill="none" stroke="#00E000" stroke-width="1.2" shape-rendering="geometricPrecision"/></svg>
<div style="position:absolute;left:404px;top:72px;width:55px;height:22px;background:#fff;border-top:1px solid #ACA899;border-left:1px solid #ACA899;border-right:1px solid #fff;border-bottom:1px solid #fff;box-sizing:border-box;"></div><div style="position:absolute;left:405px;top:73px;width:53px;height:20px;border-top:1px solid #716F64;border-left:1px solid #716F64;border-right:1px solid #F1EFE2;border-bottom:1px solid #F1EFE2;box-sizing:border-box;"></div><div style="position:absolute;left:441px;top:74px;width:16px;height:18px;background:#ECE9D8;border-top:1px solid #F1EFE2;border-left:1px solid #F1EFE2;border-right:1px solid #716F64;border-bottom:1px solid #716F64;box-sizing:border-box;"></div><div style="position:absolute;left:442px;top:75px;width:14px;height:16px;border-top:1px solid #fff;border-left:1px solid #fff;border-right:1px solid #ACA899;border-bottom:1px solid #ACA899;box-sizing:border-box;"></div><div style="position:absolute;left:445px;top:81px;width:0;height:0;border-left:4px solid transparent;border-right:4px solid transparent;border-top:4px solid #ACA899;"></div><div style="position:absolute;left:408px;top:77px;white-space:pre;font:13px 'Liberation Sans',sans-serif;color:#ACA899;line-height:15px;">AC</div>
<div style="position:absolute;left:460px;top:72px;width:54px;height:22px;background:#fff;border-top:1px solid #ACA899;border-left:1px solid #ACA899;border-right:1px solid #fff;border-bottom:1px solid #fff;box-sizing:border-box;"></div><div style="position:absolute;left:461px;top:73px;width:52px;height:20px;border-top:1px solid #716F64;border-left:1px solid #716F64;border-right:1px solid #F1EFE2;border-bottom:1px solid #F1EFE2;box-sizing:border-box;"></div><div style="position:absolute;left:496px;top:74px;width:16px;height:18px;background:#ECE9D8;border-top:1px solid #F1EFE2;border-left:1px solid #F1EFE2;border-right:1px solid #716F64;border-bottom:1px solid #716F64;box-sizing:border-box;"></div><div style="position:absolute;left:497px;top:75px;width:14px;height:16px;border-top:1px solid #fff;border-left:1px solid #fff;border-right:1px solid #ACA899;border-bottom:1px solid #ACA899;box-sizing:border-box;"></div><div style="position:absolute;left:500px;top:81px;width:0;height:0;border-left:4px solid transparent;border-right:4px solid transparent;border-top:4px solid #ACA899;"></div><div style="position:absolute;left:464px;top:77px;white-space:pre;font:13px 'Liberation Sans',sans-serif;color:#ACA899;line-height:15px;">AC</div>
<div style="position:absolute;left:516px;top:72px;width:112px;height:22px;background:#fff;border-top:1px solid #ACA899;border-left:1px solid #ACA899;border-right:1px solid #fff;border-bottom:1px solid #fff;box-sizing:border-box;"></div><div style="position:absolute;left:517px;top:73px;width:110px;height:20px;border-top:1px solid #716F64;border-left:1px solid #716F64;border-right:1px solid #F1EFE2;border-bottom:1px solid #F1EFE2;box-sizing:border-box;"></div><div style="position:absolute;left:610px;top:74px;width:16px;height:18px;background:#ECE9D8;border-top:1px solid #F1EFE2;border-left:1px solid #F1EFE2;border-right:1px solid #716F64;border-bottom:1px solid #716F64;box-sizing:border-box;"></div><div style="position:absolute;left:611px;top:75px;width:14px;height:16px;border-top:1px solid #fff;border-left:1px solid #fff;border-right:1px solid #ACA899;border-bottom:1px solid #ACA899;box-sizing:border-box;"></div><div style="position:absolute;left:614px;top:81px;width:0;height:0;border-left:4px solid transparent;border-right:4px solid transparent;border-top:4px solid #ACA899;"></div><div style="position:absolute;left:520px;top:77px;white-space:pre;font:13px 'Liberation Sans',sans-serif;color:#ACA899;line-height:15px;">±1V</div>
<div style="position:absolute;left:629px;top:72px;width:111px;height:22px;background:#fff;border-top:1px solid #ACA899;border-left:1px solid #ACA899;border-right:1px solid #fff;border-bottom:1px solid #fff;box-sizing:border-box;"></div><div style="position:absolute;left:630px;top:73px;width:109px;height:20px;border-top:1px solid #716F64;border-left:1px solid #716F64;border-right:1px solid #F1EFE2;border-bottom:1px solid #F1EFE2;box-sizing:border-box;"></div><div style="position:absolute;left:722px;top:74px;width:16px;height:18px;background:#ECE9D8;border-top:1px solid #F1EFE2;border-left:1px solid #F1EFE2;border-right:1px solid #716F64;border-bottom:1px solid #716F64;box-sizing:border-box;"></div><div style="position:absolute;left:723px;top:75px;width:14px;height:16px;border-top:1px solid #fff;border-left:1px solid #fff;border-right:1px solid #ACA899;border-bottom:1px solid #ACA899;box-sizing:border-box;"></div><div style="position:absolute;left:726px;top:81px;width:0;height:0;border-left:4px solid transparent;border-right:4px solid transparent;border-top:4px solid #ACA899;"></div><div style="position:absolute;left:633px;top:77px;white-space:pre;font:13px 'Liberation Sans',sans-serif;color:#ACA899;line-height:15px;">±1V</div>
<div style="position:absolute;left:743px;top:76px;white-space:pre;font:bold 13px 'Liberation Sans',sans-serif;color:#000;line-height:15px;">Probe</div>
<div style="position:absolute;left:783px;top:72px;width:63px;height:22px;background:#fff;border-top:1px solid #ACA899;border-left:1px solid #ACA899;border-right:1px solid #fff;border-bottom:1px solid #fff;box-sizing:border-box;"></div><div style="position:absolute;left:784px;top:73px;width:61px;height:20px;border-top:1px solid #716F64;border-left:1px solid #716F64;border-right:1px solid #F1EFE2;border-bottom:1px solid #F1EFE2;box-sizing:border-box;"></div><div style="position:absolute;left:828px;top:74px;width:16px;height:18px;background:#ECE9D8;border-top:1px solid #F1EFE2;border-left:1px solid #F1EFE2;border-right:1px solid #716F64;border-bottom:1px solid #716F64;box-sizing:border-box;"></div><div style="position:absolute;left:829px;top:75px;width:14px;height:16px;border-top:1px solid #fff;border-left:1px solid #fff;border-right:1px solid #ACA899;border-bottom:1px solid #ACA899;box-sizing:border-box;"></div><div style="position:absolute;left:832px;top:81px;width:0;height:0;border-left:4px solid transparent;border-right:4px solid transparent;border-top:4px solid #000;"></div><div style="position:absolute;left:787px;top:77px;white-space:pre;font:bold 13px 'Liberation Sans',sans-serif;color:#0000FF;line-height:15px;">×1</div>
<div style="position:absolute;left:848px;top:72px;width:63px;height:22px;background:#fff;border-top:1px solid #ACA899;border-left:1px solid #ACA899;border-right:1px solid #fff;border-bottom:1px solid #fff;box-sizing:border-box;"></div><div style="position:absolute;left:849px;top:73px;width:61px;height:20px;border-top:1px solid #716F64;border-left:1px solid #716F64;border-right:1px solid #F1EFE2;border-bottom:1px solid #F1EFE2;box-sizing:border-box;"></div><div style="position:absolute;left:893px;top:74px;width:16px;height:18px;background:#ECE9D8;border-top:1px solid #F1EFE2;border-left:1px solid #F1EFE2;border-right:1px solid #716F64;border-bottom:1px solid #716F64;box-sizing:border-box;"></div><div style="position:absolute;left:894px;top:75px;width:14px;height:16px;border-top:1px solid #fff;border-left:1px solid #fff;border-right:1px solid #ACA899;border-bottom:1px solid #ACA899;box-sizing:border-box;"></div><div style="position:absolute;left:897px;top:81px;width:0;height:0;border-left:4px solid transparent;border-right:4px solid transparent;border-top:4px solid #ACA899;"></div><div style="position:absolute;left:852px;top:77px;white-space:pre;font:bold 13px 'Liberation Sans',sans-serif;color:#ACA899;line-height:15px;">×1</div>
<div style="position:absolute;left:912px;top:72px;width:109px;height:11px;background:linear-gradient(to right,#00FF00 0%,#40E000 40%,#D0B000 80%,#F0A000 100%);border:1px solid #F1EFE2;box-sizing:border-box;"></div>
<div style="position:absolute;left:912px;top:72px;white-space:pre;width:109px;text-align:center;font:bold 8px 'Liberation Sans',sans-serif;color:#0000CC;line-height:11px;letter-spacing:0.6px;">100%(-0.0 dBFS)</div>
<div style="position:absolute;left:912px;top:84px;width:109px;height:10px;background:#fff;border-top:1px solid #ACA899;border-left:1px solid #ACA899;box-sizing:border-box;"></div>
<div style="position:absolute;left:0px;top:93px;width:1024px;height:1px;background:#ACA899;"></div>
<div style="position:absolute;left:0px;top:94px;width:1024px;height:620px;background:#808080;"></div>
<div style="position:absolute;left:0px;top:94px;width:1024px;height:1px;background:#ACA899;"></div>
<div style="position:absolute;left:0px;top:95px;width:1024px;height:1px;background:#716F64;"></div>
<div style="position:absolute;left:0px;top:94px;width:1px;height:620px;background:#ACA899;"></div>
<div style="position:absolute;left:1px;top:95px;width:1px;height:618px;background:#716F64;"></div>
<div style="position:absolute;left:1023px;top:94px;width:1px;height:620px;background:#fff;"></div>
<div style="position:absolute;left:1022px;top:95px;width:1px;height:618px;background:#F1EFE2;"></div>
<div style="position:absolute;left:0px;top:713px;width:1024px;height:1px;background:#fff;"></div>
<div style="position:absolute;left:1px;top:712px;width:1022px;height:1px;background:#F1EFE2;"></div>
<div style="position:absolute;left:2px;top:96px;width:741px;height:308px;background:#7A8EDD;border-radius:6px 6px 0 0;box-shadow:inset 1px 0 0 #5A64C8,inset 2px 0 0 #6A78D2,inset -1px 0 0 #5A64C8,inset -2px 0 0 #6A78D2,inset 0 -1px 0 #5A64C8,inset 0 -2px 0 #6A78D2;overflow:hidden;"><div style="position:absolute;left:0px;top:0px;width:741px;height:30px;background:linear-gradient(to bottom,#7AA0EE 0px,#9DB5EC 1px,#9DB5EC 2px,#8CA6E6 3px,#7D9AE2 5px,#7A98E0 12px,#7A98E0 20px,#7DA2E6 23px,#7FA4E8 26px,#7890DE 27px,#7088DA 30px);box-shadow:inset 1px 0 0 #5A64C8,inset -1px 0 0 #5A64C8;"></div></div><svg style="position:absolute;left:8px;top:104px;" width="16" height="16" viewBox="0 0 16 16" shape-rendering="crispEdges"><rect width="16" height="16" fill="#00FF00"/><path d="M0 8Q3 1 6 6T11 11T16 6" stroke="#FFFF00" fill="none" stroke-width="1" shape-rendering="geometricPrecision"/></svg><svg style="position:absolute;left:0;top:0;overflow:visible" width="1" height="1"><text x="28" y="118" font-family="Liberation Sans" font-weight="bold" font-size="13.5" fill="#D8E2F7" textLength="75" lengthAdjust="spacingAndGlyphs">Oscilloscope</text></svg><div style="position:absolute;left:670px;top:102px;width:20px;height:20px;background:linear-gradient(135deg,#9BB2F0 0%,#6C8CE8 50%,#4A70E0 100%);border:1px solid #D8E0F8;border-radius:3px;box-sizing:border-box;"></div><div style="position:absolute;left:675px;top:114px;width:6px;height:3px;background:#fff;"></div><div style="position:absolute;left:693px;top:102px;width:20px;height:20px;background:linear-gradient(135deg,#9BB2F0 0%,#6C8CE8 50%,#4A70E0 100%);border:1px solid #D8E0F8;border-radius:3px;box-sizing:border-box;"></div><div style="position:absolute;left:697px;top:106px;width:11px;height:10px;border:1px solid #fff;border-top-width:3px;box-sizing:border-box;"></div><div style="position:absolute;left:716px;top:102px;width:20px;height:20px;background:linear-gradient(135deg,#C08898 0%,#B06A7C 50%,#A85A6C 100%);border:1px solid #D8E0F8;border-radius:3px;box-sizing:border-box;"></div><svg style="position:absolute;left:716px;top:102px" width="20" height="20"><path d="M5.5 5.5L14.5 14.5M14.5 5.5L5.5 14.5" stroke="#fff" stroke-width="2.2"/></svg>
<div style="position:absolute;left:6px;top:126px;width:733px;height:274px;background:#fff;border-top:1px solid #ACA899;border-left:1px solid #ACA899;border-right:1px solid #fff;border-bottom:1px solid #fff;box-sizing:border-box;"></div><div style="position:absolute;left:7px;top:127px;width:731px;height:272px;border-top:1px solid #716F64;border-left:1px solid #716F64;border-right:1px solid #F1EFE2;border-bottom:1px solid #F1EFE2;box-sizing:border-box;"></div>
<div style="position:absolute;left:2px;top:404px;width:741px;height:308px;background:#0055E5;border-radius:6px 6px 0 0;box-shadow:inset 1px 0 0 #00209A,inset 2px 0 0 #0044CC,inset -1px 0 0 #00209A,inset -2px 0 0 #0044CC,inset 0 -1px 0 #00209A,inset 0 -2px 0 #0044CC;overflow:hidden;"><div style="position:absolute;left:0px;top:0px;width:741px;height:30px;background:linear-gradient(to bottom,#0A50D8 0px,#3B8CF8 1px,#3B8CF8 2px,#1F6EF0 4px,#0858E6 7px,#0054E3 10px,#0054E3 21px,#0060F2 23px,#0066F8 28px,#0050D8 29px,#0040B8 30px);box-shadow:inset 1px 0 0 #00209A,inset -1px 0 0 #00209A;"></div></div><svg style="position:absolute;left:8px;top:412px;" width="16" height="16" viewBox="0 0 16 16" shape-rendering="crispEdges"><rect width="16" height="16" fill="#0000FF"/><g fill="#FFFF00"><rect x="1" y="1" width="1" height="14"/><rect x="4" y="4" width="1" height="11"/><rect x="7" y="8" width="1" height="7"/><rect x="10" y="10" width="1" height="5"/><rect x="13" y="11" width="1" height="4"/><rect x="0" y="14" width="16" height="1"/></g></svg><svg style="position:absolute;left:0;top:0;overflow:visible" width="1" height="1"><text x="29" y="427" font-family="Liberation Sans" font-weight="bold" font-size="13.5" fill="#0A1878" textLength="116" lengthAdjust="spacingAndGlyphs">Spectrum Analyzer</text><text x="28" y="426" font-family="Liberation Sans" font-weight="bold" font-size="13.5" fill="#fff" textLength="116" lengthAdjust="spacingAndGlyphs">Spectrum Analyzer</text></svg><div style="position:absolute;left:670px;top:410px;width:20px;height:20px;background:linear-gradient(135deg,#7AB0FF 0%,#2A70F5 50%,#1050E0 100%);border:1px solid #fff;border-radius:3px;box-sizing:border-box;"></div><div style="position:absolute;left:675px;top:422px;width:6px;height:3px;background:#fff;"></div><div style="position:absolute;left:693px;top:410px;width:20px;height:20px;background:linear-gradient(135deg,#7AB0FF 0%,#2A70F5 50%,#1050E0 100%);border:1px solid #fff;border-radius:3px;box-sizing:border-box;"></div><div style="position:absolute;left:697px;top:414px;width:11px;height:10px;border:1px solid #fff;border-top-width:3px;box-sizing:border-box;"></div><div style="position:absolute;left:716px;top:410px;width:20px;height:20px;background:linear-gradient(135deg,#F0A080 0%,#E05A30 50%,#C84018 100%);border:1px solid #fff;border-radius:3px;box-sizing:border-box;"></div><svg style="position:absolute;left:716px;top:410px" width="20" height="20"><path d="M5.5 5.5L14.5 14.5M14.5 5.5L5.5 14.5" stroke="#fff" stroke-width="2.2"/></svg>
<div style="position:absolute;left:6px;top:434px;width:733px;height:274px;background:#fff;border-top:1px solid #ACA899;border-left:1px solid #ACA899;border-right:1px solid #fff;border-bottom:1px solid #fff;box-sizing:border-box;"></div><div style="position:absolute;left:7px;top:435px;width:731px;height:272px;border-top:1px solid #716F64;border-left:1px solid #716F64;border-right:1px solid #F1EFE2;border-bottom:1px solid #F1EFE2;box-sizing:border-box;"></div>
<div style="position:absolute;left:743px;top:96px;width:279px;height:123px;background:#7A8EDD;border-radius:6px 6px 0 0;box-shadow:inset 1px 0 0 #5A64C8,inset 2px 0 0 #6A78D2,inset -1px 0 0 #5A64C8,inset -2px 0 0 #6A78D2,inset 0 -1px 0 #5A64C8,inset 0 -2px 0 #6A78D2;overflow:hidden;"><div style="position:absolute;left:0px;top:0px;width:279px;height:31px;background:linear-gradient(to bottom,#7AA0EE 0px,#9DB5EC 1px,#9DB5EC 2px,#8CA6E6 3px,#7D9AE2 5px,#7A98E0 12px,#7A98E0 20px,#7DA2E6 23px,#7FA4E8 26px,#7890DE 27px,#7088DA 30px);box-shadow:inset 1px 0 0 #5A64C8,inset -1px 0 0 #5A64C8;"></div></div><svg style="position:absolute;left:749px;top:105px;" width="16" height="16" viewBox="0 0 16 16" shape-rendering="crispEdges"><rect width="16" height="16" fill="#fff"/><g shape-rendering="crispEdges"><path d="M1 1h3v1H1zM1 6h3v1H1zM1 1h1v6H1zM4 2h1v4H4z" fill="#0000FF"/><path d="M6 1h3v1H6zM6 6h3v1H6zM6 1h1v6H6zM9 2h1v4H9z" fill="#FF0000"/><path d="M11 1h3v1h-3zM11 4h3v1h-3zM11 1h1v6h-1zM14 2h1v2h-1z" fill="#00E000"/><path d="M6 8h3v1H6zM6 14h3v1H6zM5 9h1v1H5zM9 9h1v1H9zM5 13h1v1H5zM9 13h1v1H9zM4 10h1v3H4zM10 10h1v3h-1zM7 10h1v3H7zM6 11h3v1H6zM10 14h1v1h-1zM11 15h1v1h-1z" fill="#000"/></g></svg><svg style="position:absolute;left:0;top:0;overflow:visible" width="1" height="1"><text x="769" y="119" font-family="Liberation Sans" font-weight="bold" font-size="13.5" fill="#D8E2F7" textLength="98.6" lengthAdjust="spacingAndGlyphs">DampingRatio_A</text></svg><div style="position:absolute;left:949px;top:103px;width:20px;height:20px;background:linear-gradient(135deg,#9BB2F0 0%,#6C8CE8 50%,#4A70E0 100%);border:1px solid #D8E0F8;border-radius:3px;box-sizing:border-box;"></div><div style="position:absolute;left:954px;top:115px;width:6px;height:3px;background:#fff;"></div><div style="position:absolute;left:972px;top:103px;width:20px;height:20px;background:linear-gradient(135deg,#9BB2F0 0%,#6C8CE8 50%,#4A70E0 100%);border:1px solid #D8E0F8;border-radius:3px;box-sizing:border-box;"></div><div style="position:absolute;left:976px;top:107px;width:11px;height:10px;border:1px solid #fff;border-top-width:3px;box-sizing:border-box;"></div><div style="position:absolute;left:995px;top:103px;width:20px;height:20px;background:linear-gradient(135deg,#C08898 0%,#B06A7C 50%,#A85A6C 100%);border:1px solid #D8E0F8;border-radius:3px;box-sizing:border-box;"></div><svg style="position:absolute;left:995px;top:103px" width="20" height="20"><path d="M5.5 5.5L14.5 14.5M14.5 5.5L5.5 14.5" stroke="#fff" stroke-width="2.2"/></svg>
<div style="position:absolute;left:747px;top:127px;width:271px;height:88px;background:#fff;"></div>
<div style="position:absolute;left:743px;top:219px;width:279px;height:124px;background:#7A8EDD;border-radius:6px 6px 0 0;box-shadow:inset 1px 0 0 #5A64C8,inset 2px 0 0 #6A78D2,inset -1px 0 0 #5A64C8,inset -2px 0 0 #6A78D2,inset 0 -1px 0 #5A64C8,inset 0 -2px 0 #6A78D2;overflow:hidden;"><div style="position:absolute;left:0px;top:0px;width:279px;height:31px;background:linear-gradient(to bottom,#7AA0EE 0px,#9DB5EC 1px,#9DB5EC 2px,#8CA6E6 3px,#7D9AE2 5px,#7A98E0 12px,#7A98E0 20px,#7DA2E6 23px,#7FA4E8 26px,#7890DE 27px,#7088DA 30px);box-shadow:inset 1px 0 0 #5A64C8,inset -1px 0 0 #5A64C8;"></div></div><svg style="position:absolute;left:749px;top:228px;" width="16" height="16" viewBox="0 0 16 16" shape-rendering="crispEdges"><rect width="16" height="16" fill="#fff"/><g shape-rendering="crispEdges"><path d="M1 1h3v1H1zM1 6h3v1H1zM1 1h1v6H1zM4 2h1v4H4z" fill="#0000FF"/><path d="M6 1h3v1H6zM6 6h3v1H6zM6 1h1v6H6zM9 2h1v4H9z" fill="#FF0000"/><path d="M11 1h3v1h-3zM11 4h3v1h-3zM11 1h1v6h-1zM14 2h1v2h-1z" fill="#00E000"/><path d="M6 8h3v1H6zM6 14h3v1H6zM5 9h1v1H5zM9 9h1v1H9zM5 13h1v1H5zM9 13h1v1H9zM4 10h1v3H4zM10 10h1v3h-1zM7 10h1v3H7zM6 11h3v1H6zM10 14h1v1h-1zM11 15h1v1h-1z" fill="#000"/></g></svg><svg style="position:absolute;left:0;top:0;overflow:visible" width="1" height="1"><text x="769" y="242" font-family="Liberation Sans" font-weight="bold" font-size="13.5" fill="#D8E2F7" textLength="116.2" lengthAdjust="spacingAndGlyphs">Half-Power Method</text></svg><div style="position:absolute;left:949px;top:226px;width:20px;height:20px;background:linear-gradient(135deg,#9BB2F0 0%,#6C8CE8 50%,#4A70E0 100%);border:1px solid #D8E0F8;border-radius:3px;box-sizing:border-box;"></div><div style="position:absolute;left:954px;top:238px;width:6px;height:3px;background:#fff;"></div><div style="position:absolute;left:972px;top:226px;width:20px;height:20px;background:linear-gradient(135deg,#9BB2F0 0%,#6C8CE8 50%,#4A70E0 100%);border:1px solid #D8E0F8;border-radius:3px;box-sizing:border-box;"></div><div style="position:absolute;left:976px;top:230px;width:11px;height:10px;border:1px solid #fff;border-top-width:3px;box-sizing:border-box;"></div><div style="position:absolute;left:995px;top:226px;width:20px;height:20px;background:linear-gradient(135deg,#C08898 0%,#B06A7C 50%,#A85A6C 100%);border:1px solid #D8E0F8;border-radius:3px;box-sizing:border-box;"></div><svg style="position:absolute;left:995px;top:226px" width="20" height="20"><path d="M5.5 5.5L14.5 14.5M14.5 5.5L5.5 14.5" stroke="#fff" stroke-width="2.2"/></svg>
<div style="position:absolute;left:747px;top:250px;width:271px;height:89px;background:#fff;"></div>
<div style="position:absolute;left:743px;top:343px;width:279px;height:124px;background:#7A8EDD;border-radius:6px 6px 0 0;box-shadow:inset 1px 0 0 #5A64C8,inset 2px 0 0 #6A78D2,inset -1px 0 0 #5A64C8,inset -2px 0 0 #6A78D2,inset 0 -1px 0 #5A64C8,inset 0 -2px 0 #6A78D2;overflow:hidden;"><div style="position:absolute;left:0px;top:0px;width:279px;height:31px;background:linear-gradient(to bottom,#7AA0EE 0px,#9DB5EC 1px,#9DB5EC 2px,#8CA6E6 3px,#7D9AE2 5px,#7A98E0 12px,#7A98E0 20px,#7DA2E6 23px,#7FA4E8 26px,#7890DE 27px,#7088DA 30px);box-shadow:inset 1px 0 0 #5A64C8,inset -1px 0 0 #5A64C8;"></div></div><svg style="position:absolute;left:749px;top:352px;" width="16" height="16" viewBox="0 0 16 16" shape-rendering="crispEdges"><rect width="16" height="16" fill="#fff"/><g shape-rendering="crispEdges"><path d="M1 1h3v1H1zM1 6h3v1H1zM1 1h1v6H1zM4 2h1v4H4z" fill="#0000FF"/><path d="M6 1h3v1H6zM6 6h3v1H6zM6 1h1v6H6zM9 2h1v4H9z" fill="#FF0000"/><path d="M11 1h3v1h-3zM11 4h3v1h-3zM11 1h1v6h-1zM14 2h1v2h-1z" fill="#00E000"/><path d="M6 8h3v1H6zM6 14h3v1H6zM5 9h1v1H5zM9 9h1v1H9zM5 13h1v1H5zM9 13h1v1H9zM4 10h1v3H4zM10 10h1v3h-1zM7 10h1v3H7zM6 11h3v1H6zM10 14h1v1h-1zM11 15h1v1h-1z" fill="#000"/></g></svg><svg style="position:absolute;left:0;top:0;overflow:visible" width="1" height="1"><text x="769" y="366" font-family="Liberation Sans" font-weight="bold" font-size="13.5" fill="#D8E2F7" textLength="52.2" lengthAdjust="spacingAndGlyphs">Q Factor</text></svg><div style="position:absolute;left:949px;top:350px;width:20px;height:20px;background:linear-gradient(135deg,#9BB2F0 0%,#6C8CE8 50%,#4A70E0 100%);border:1px solid #D8E0F8;border-radius:3px;box-sizing:border-box;"></div><div style="position:absolute;left:954px;top:362px;width:6px;height:3px;background:#fff;"></div><div style="position:absolute;left:972px;top:350px;width:20px;height:20px;background:linear-gradient(135deg,#9BB2F0 0%,#6C8CE8 50%,#4A70E0 100%);border:1px solid #D8E0F8;border-radius:3px;box-sizing:border-box;"></div><div style="position:absolute;left:976px;top:354px;width:11px;height:10px;border:1px solid #fff;border-top-width:3px;box-sizing:border-box;"></div><div style="position:absolute;left:995px;top:350px;width:20px;height:20px;background:linear-gradient(135deg,#C08898 0%,#B06A7C 50%,#A85A6C 100%);border:1px solid #D8E0F8;border-radius:3px;box-sizing:border-box;"></div><svg style="position:absolute;left:995px;top:350px" width="20" height="20"><path d="M5.5 5.5L14.5 14.5M14.5 5.5L5.5 14.5" stroke="#fff" stroke-width="2.2"/></svg>
<div style="position:absolute;left:747px;top:374px;width:271px;height:89px;background:#fff;"></div>
<div style="position:absolute;left:743px;top:467px;width:279px;height:124px;background:#7A8EDD;border-radius:6px 6px 0 0;box-shadow:inset 1px 0 0 #5A64C8,inset 2px 0 0 #6A78D2,inset -1px 0 0 #5A64C8,inset -2px 0 0 #6A78D2,inset 0 -1px 0 #5A64C8,inset 0 -2px 0 #6A78D2;overflow:hidden;"><div style="position:absolute;left:0px;top:0px;width:279px;height:31px;background:linear-gradient(to bottom,#7AA0EE 0px,#9DB5EC 1px,#9DB5EC 2px,#8CA6E6 3px,#7D9AE2 5px,#7A98E0 12px,#7A98E0 20px,#7DA2E6 23px,#7FA4E8 26px,#7890DE 27px,#7088DA 30px);box-shadow:inset 1px 0 0 #5A64C8,inset -1px 0 0 #5A64C8;"></div></div><svg style="position:absolute;left:749px;top:476px;" width="16" height="16" viewBox="0 0 16 16" shape-rendering="crispEdges"><rect width="16" height="16" fill="#fff"/><g shape-rendering="crispEdges"><path d="M1 1h3v1H1zM1 6h3v1H1zM1 1h1v6H1zM4 2h1v4H4z" fill="#0000FF"/><path d="M6 1h3v1H6zM6 6h3v1H6zM6 1h1v6H6zM9 2h1v4H9z" fill="#FF0000"/><path d="M11 1h3v1h-3zM11 4h3v1h-3zM11 1h1v6h-1zM14 2h1v2h-1z" fill="#00E000"/><path d="M6 8h3v1H6zM6 14h3v1H6zM5 9h1v1H5zM9 9h1v1H9zM5 13h1v1H5zM9 13h1v1H9zM4 10h1v3H4zM10 10h1v3h-1zM7 10h1v3H7zM6 11h3v1H6zM10 14h1v1h-1zM11 15h1v1h-1z" fill="#000"/></g></svg><svg style="position:absolute;left:0;top:0;overflow:visible" width="1" height="1"><text x="769" y="490" font-family="Liberation Sans" font-weight="bold" font-size="13.5" fill="#D8E2F7" textLength="116.1" lengthAdjust="spacingAndGlyphs">Natural Frequency</text></svg><div style="position:absolute;left:949px;top:474px;width:20px;height:20px;background:linear-gradient(135deg,#9BB2F0 0%,#6C8CE8 50%,#4A70E0 100%);border:1px solid #D8E0F8;border-radius:3px;box-sizing:border-box;"></div><div style="position:absolute;left:954px;top:486px;width:6px;height:3px;background:#fff;"></div><div style="position:absolute;left:972px;top:474px;width:20px;height:20px;background:linear-gradient(135deg,#9BB2F0 0%,#6C8CE8 50%,#4A70E0 100%);border:1px solid #D8E0F8;border-radius:3px;box-sizing:border-box;"></div><div style="position:absolute;left:976px;top:478px;width:11px;height:10px;border:1px solid #fff;border-top-width:3px;box-sizing:border-box;"></div><div style="position:absolute;left:995px;top:474px;width:20px;height:20px;background:linear-gradient(135deg,#C08898 0%,#B06A7C 50%,#A85A6C 100%);border:1px solid #D8E0F8;border-radius:3px;box-sizing:border-box;"></div><svg style="position:absolute;left:995px;top:474px" width="20" height="20"><path d="M5.5 5.5L14.5 14.5M14.5 5.5L5.5 14.5" stroke="#fff" stroke-width="2.2"/></svg>
<div style="position:absolute;left:747px;top:498px;width:271px;height:89px;background:#fff;"></div>
<div style="position:absolute;left:743px;top:591px;width:279px;height:122px;background:#7A8EDD;border-radius:6px 6px 0 0;box-shadow:inset 1px 0 0 #5A64C8,inset 2px 0 0 #6A78D2,inset -1px 0 0 #5A64C8,inset -2px 0 0 #6A78D2,inset 0 -1px 0 #5A64C8,inset 0 -2px 0 #6A78D2;overflow:hidden;"><div style="position:absolute;left:0px;top:0px;width:279px;height:31px;background:linear-gradient(to bottom,#7AA0EE 0px,#9DB5EC 1px,#9DB5EC 2px,#8CA6E6 3px,#7D9AE2 5px,#7A98E0 12px,#7A98E0 20px,#7DA2E6 23px,#7FA4E8 26px,#7890DE 27px,#7088DA 30px);box-shadow:inset 1px 0 0 #5A64C8,inset -1px 0 0 #5A64C8;"></div></div><svg style="position:absolute;left:749px;top:600px;" width="16" height="16" viewBox="0 0 16 16" shape-rendering="crispEdges"><rect width="16" height="16" fill="#fff"/><g shape-rendering="crispEdges"><path d="M1 1h3v1H1zM1 6h3v1H1zM1 1h1v6H1zM4 2h1v4H4z" fill="#0000FF"/><path d="M6 1h3v1H6zM6 6h3v1H6zM6 1h1v6H6zM9 2h1v4H9z" fill="#FF0000"/><path d="M11 1h3v1h-3zM11 4h3v1h-3zM11 1h1v6h-1zM14 2h1v2h-1z" fill="#00E000"/><path d="M6 8h3v1H6zM6 14h3v1H6zM5 9h1v1H5zM9 9h1v1H9zM5 13h1v1H5zM9 13h1v1H9zM4 10h1v3H4zM10 10h1v3h-1zM7 10h1v3H7zM6 11h3v1H6zM10 14h1v1h-1zM11 15h1v1h-1z" fill="#000"/></g></svg><svg style="position:absolute;left:0;top:0;overflow:visible" width="1" height="1"><text x="769" y="614" font-family="Liberation Sans" font-weight="bold" font-size="13.5" fill="#D8E2F7" textLength="168.8" lengthAdjust="spacingAndGlyphs">Damped Natural Frequency</text></svg><div style="position:absolute;left:949px;top:598px;width:20px;height:20px;background:linear-gradient(135deg,#9BB2F0 0%,#6C8CE8 50%,#4A70E0 100%);border:1px solid #D8E0F8;border-radius:3px;box-sizing:border-box;"></div><div style="position:absolute;left:954px;top:610px;width:6px;height:3px;background:#fff;"></div><div style="position:absolute;left:972px;top:598px;width:20px;height:20px;background:linear-gradient(135deg,#9BB2F0 0%,#6C8CE8 50%,#4A70E0 100%);border:1px solid #D8E0F8;border-radius:3px;box-sizing:border-box;"></div><div style="position:absolute;left:976px;top:602px;width:11px;height:10px;border:1px solid #fff;border-top-width:3px;box-sizing:border-box;"></div><div style="position:absolute;left:995px;top:598px;width:20px;height:20px;background:linear-gradient(135deg,#C08898 0%,#B06A7C 50%,#A85A6C 100%);border:1px solid #D8E0F8;border-radius:3px;box-sizing:border-box;"></div><svg style="position:absolute;left:995px;top:598px" width="20" height="20"><path d="M5.5 5.5L14.5 14.5M14.5 5.5L5.5 14.5" stroke="#fff" stroke-width="2.2"/></svg>
<div style="position:absolute;left:747px;top:622px;width:271px;height:87px;background:#fff;"></div>
<svg style="position:absolute;left:8px;top:128px" width="730" height="270" viewBox="8 128 730 270"><path d="M125.5 156V365" stroke="#00FF00" stroke-dasharray="3 3"/><path d="M189.5 156V365" stroke="#00FF00" stroke-dasharray="3 3"/><path d="M253.5 156V365" stroke="#00FF00" stroke-dasharray="3 3"/><path d="M317.5 156V365" stroke="#00FF00" stroke-dasharray="3 3"/><path d="M381.5 156V365" stroke="#00FF00" stroke-dasharray="3 3"/><path d="M445.5 156V365" stroke="#00FF00" stroke-dasharray="3 3"/><path d="M509.5 156V365" stroke="#00FF00" stroke-dasharray="3 3"/><path d="M573.5 156V365" stroke="#00FF00" stroke-dasharray="3 3"/><path d="M637.5 156V365" stroke="#00FF00" stroke-dasharray="3 3"/><path d="M62 176.5H701" stroke="#00FF00" stroke-dasharray="3 3"/><path d="M62 197.5H701" stroke="#00FF00" stroke-dasharray="3 3"/><path d="M62 218.5H701" stroke="#00FF00" stroke-dasharray="3 3"/><path d="M62 239.5H701" stroke="#00FF00" stroke-dasharray="3 3"/><path d="M62 260.5H701" stroke="#00FF00" stroke-dasharray="3 3"/><path d="M62 281.5H701" stroke="#00FF00" stroke-dasharray="3 3"/><path d="M62 302.5H701" stroke="#00FF00" stroke-dasharray="3 3"/><path d="M62 323.5H701" stroke="#00FF00" stroke-dasharray="3 3"/><path d="M62 344.5H701" stroke="#00FF00" stroke-dasharray="3 3"/><rect x="62.5" y="156.5" width="639" height="209" fill="none" stroke="#00FF00"/><path d="M62.5 231.5 L63.5 326.5 L64.5 171.5 L65.5 359.5 L66.5 169.5 L67.5 330.5 L68.5 224.5 L69.5 259.5 L70.5 299.5 L71.5 192.5 L72.5 347.5 L73.5 170.5 L74.5 340.5 L75.5 205.5 L76.5 284.5 L77.5 272.5 L78.5 216.5 L79.5 330.5 L80.5 177.5 L81.5 343.5 L82.5 192.5 L83.5 304.5 L84.5 248.5 L85.5 240.5 L86.5 310.5 L87.5 191.5 L88.5 339.5 L89.5 187.5 L90.5 318.5 L91.5 228.5 L92.5 262.5 L93.5 288.5 L94.5 208.5 L95.5 329.5 L96.5 188.5 L97.5 326.5 L98.5 213.5 L99.5 282.5 L100.5 267.5 L101.5 227.5 L102.5 315.5 L103.5 195.5 L104.5 327.5 L105.5 204.5 L106.5 298.5 L107.5 248.5 L108.5 246.5 L109.5 298.5 L110.5 206.5 L111.5 323.5 L112.5 201.5 L113.5 308.5 L114.5 233.5 L115.5 264.5 L116.5 281.5 L117.5 220.5 L118.5 314.5 L119.5 202.5 L120.5 314.5 L121.5 221.5 L122.5 280.5 L123.5 264.5 L124.5 236.5 L125.5 303.5 L126.5 208.5 L127.5 314.5 L128.5 214.5 L129.5 292.5 L130.5 249.5 L131.5 251.5 L132.5 289.5 L133.5 218.5 L134.5 310.5 L135.5 212.5 L136.5 300.5 L137.5 236.5 L138.5 266.5 L139.5 275.5 L140.5 229.5 L141.5 303.5 L142.5 214.5 L143.5 304.5 L144.5 228.5 L145.5 278.5 L146.5 261.5 L147.5 242.5 L148.5 293.5 L149.5 219.5 L150.5 304.5 L151.5 223.5 L152.5 287.5 L153.5 249.5 L154.5 255.5 L155.5 282.5 L156.5 227.5 L157.5 300.5 L158.5 221.5 L159.5 293.5 L160.5 240.5 L161.5 266.5 L162.5 270.5 L163.5 237.5 L164.5 294.5 L165.5 223.5 L166.5 296.5 L167.5 233.5 L168.5 276.5 L169.5 260.5 L170.5 247.5 L171.5 286.5 L172.5 228.5 L173.5 295.5 L174.5 229.5 L175.5 283.5 L176.5 250.5 L177.5 257.5 L178.5 277.5 L179.5 235.5 L180.5 292.5 L181.5 229.5 L182.5 287.5 L183.5 243.5 L184.5 266.5 L185.5 267.5 L186.5 242.5 L187.5 287.5 L188.5 231.5 L189.5 289.5 L190.5 238.5 L191.5 274.5 L192.5 259.5 L193.5 251.5 L194.5 280.5 L195.5 235.5 L196.5 288.5 L197.5 235.5 L198.5 279.5 L199.5 251.5 L200.5 259.5 L201.5 272.5 L202.5 240.5 L203.5 286.5 L204.5 235.5 L205.5 283.5 L206.5 245.5 L207.5 266.5 L208.5 265.5 L209.5 247.5 L210.5 281.5 L211.5 237.5 L212.5 284.5 L213.5 242.5 L214.5 272.5 L215.5 258.5 L216.5 254.5 L217.5 275.5 L218.5 240.5 L219.5 283.5 L220.5 240.5 L221.5 276.5 L222.5 252.5 L223.5 260.5 L224.5 269.5 L225.5 245.5 L226.5 280.5 L227.5 240.5 L228.5 279.5 L229.5 248.5 L230.5 266.5 L231.5 263.5 L232.5 250.5 L233.5 277.5 L234.5 241.5 L235.5 279.5 L236.5 245.5 L237.5 270.5 L238.5 258.5 L239.5 256.5 L240.5 272.5 L241.5 244.5 L242.5 279.5 L243.5 244.5 L244.5 274.5 L245.5 253.5 L246.5 261.5 L247.5 267.5 L248.5 248.5 L249.5 276.5 L250.5 244.5 L251.5 275.5 L252.5 250.5 L253.5 265.5 L254.5 262.5 L255.5 253.5 L256.5 273.5 L257.5 245.5 L258.5 276.5 L259.5 248.5 L260.5 269.5 L261.5 258.5 L262.5 257.5 L263.5 269.5 L264.5 248.5 L265.5 275.5 L266.5 247.5 L267.5 272.5 L268.5 254.5 L269.5 261.5 L270.5 265.5 L271.5 251.5 L272.5 273.5 L273.5 247.5 L274.5 273.5 L275.5 251.5 L276.5 265.5 L277.5 261.5 L278.5 255.5 L279.5 270.5 L280.5 248.5 L281.5 273.5 L282.5 250.5 L283.5 268.5 L284.5 258.5 L285.5 258.5 L286.5 267.5 L287.5 250.5 L288.5 272.5 L289.5 249.5 L290.5 270.5 L291.5 255.5 L292.5 262.5 L293.5 264.5 L294.5 253.5 L295.5 271.5 L296.5 250.5 L297.5 271.5 L298.5 253.5 L299.5 265.5 L300.5 261.5 L301.5 256.5 L302.5 268.5 L303.5 251.5 L304.5 271.5 L305.5 252.5 L306.5 267.5 L307.5 258.5 L308.5 259.5 L309.5 266.5 L310.5 253.5 L311.5 270.5 L312.5 251.5 L313.5 268.5 L314.5 256.5 L315.5 262.5 L316.5 263.5 L317.5 255.5 L318.5 268.5 L319.5 252.5 L320.5 269.5 L321.5 254.5 L322.5 264.5 L323.5 260.5 L324.5 257.5 L325.5 267.5 L326.5 253.5 L327.5 269.5 L328.5 253.5 L329.5 266.5 L330.5 258.5 L331.5 260.5 L332.5 264.5 L333.5 254.5 L334.5 268.5 L335.5 253.5 L336.5 267.5 L337.5 256.5 L338.5 262.5 L339.5 262.5 L340.5 256.5 L341.5 267.5 L342.5 253.5 L343.5 267.5 L344.5 255.5 L345.5 264.5 L346.5 260.5 L347.5 258.5 L348.5 265.5 L349.5 254.5 L350.5 267.5 L351.5 254.5 L352.5 265.5 L353.5 258.5 L354.5 260.5 L355.5 263.5 L356.5 255.5 L357.5 267.5 L358.5 254.5 L359.5 266.5 L360.5 257.5 L361.5 262.5 L362.5 262.5 L363.5 257.5 L364.5 266.5 L365.5 255.5 L366.5 266.5 L367.5 256.5 L368.5 263.5 L369.5 260.5 L370.5 259.5 L371.5 264.5 L372.5 255.5 L373.5 266.5 L374.5 255.5 L375.5 264.5 L376.5 258.5 L377.5 260.5 L378.5 263.5 L379.5 257.5 L380.5 266.5 L381.5 255.5 L382.5 265.5 L383.5 257.5 L384.5 262.5 L385.5 261.5 L386.5 258.5 L387.5 265.5 L388.5 256.5 L389.5 265.5 L390.5 257.5 L391.5 263.5 L392.5 260.5 L393.5 259.5 L394.5 263.5 L395.5 256.5 L396.5 265.5 L397.5 256.5 L398.5 264.5 L399.5 259.5 L400.5 261.5 L401.5 262.5 L402.5 257.5 L403.5 265.5 L404.5 256.5 L405.5 264.5 L406.5 258.5 L407.5 262.5 L408.5 261.5 L409.5 258.5 L410.5 264.5 L411.5 256.5 L412.5 265.5 L413.5 257.5 L414.5 263.5 L415.5 260.5 L416.5 260.5 L417.5 263.5 L418.5 257.5 L419.5 264.5 L420.5 257.5 L421.5 263.5 L422.5 259.5 L423.5 261.5 L424.5 262.5 L425.5 258.5 L426.5 264.5 L427.5 257.5 L428.5 264.5 L429.5 258.5 L430.5 262.5 L431.5 261.5 L432.5 259.5 L433.5 263.5 L434.5 257.5 L435.5 264.5 L436.5 258.5 L437.5 262.5 L438.5 260.5 L439.5 260.5 L440.5 262.5 L441.5 258.5 L442.5 264.5 L443.5 257.5 L444.5 263.5 L445.5 259.5 L446.5 261.5 L447.5 261.5 L448.5 258.5 L449.5 263.5 L450.5 257.5 L451.5 263.5 L452.5 258.5 L453.5 262.5 L454.5 261.5 L455.5 259.5 L456.5 263.5 L457.5 258.5 L458.5 263.5 L459.5 258.5 L460.5 262.5 L461.5 260.5 L462.5 260.5 L463.5 262.5 L464.5 258.5 L465.5 263.5 L466.5 258.5 L467.5 263.5 L468.5 259.5 L469.5 261.5 L470.5 261.5 L471.5 259.5 L472.5 263.5 L473.5 258.5 L474.5 263.5 L475.5 259.5 L476.5 262.5 L477.5 260.5 L478.5 260.5 L479.5 262.5 L480.5 258.5 L481.5 263.5 L482.5 258.5 L483.5 262.5 L484.5 260.5 L485.5 260.5 L486.5 262.5 L487.5 259.5 L488.5 263.5 L489.5 258.5 L490.5 262.5 L491.5 259.5 L492.5 261.5 L493.5 261.5 L494.5 259.5 L495.5 262.5 L496.5 258.5 L497.5 263.5 L498.5 259.5 L499.5 261.5 L500.5 260.5 L501.5 260.5 L502.5 262.5 L503.5 258.5 L504.5 263.5 L505.5 259.5 L506.5 262.5 L507.5 260.5 L508.5 260.5 L509.5 261.5 L510.5 259.5 L511.5 262.5 L512.5 258.5 L513.5 262.5 L514.5 259.5 L515.5 261.5 L516.5 261.5 L517.5 259.5 L518.5 262.5 L519.5 259.5 L520.5 262.5 L521.5 259.5 L522.5 261.5 L523.5 260.5 L524.5 260.5 L525.5 262.5 L526.5 259.5 L527.5 262.5 L528.5 259.5 L529.5 262.5 L530.5 260.5 L531.5 260.5 L532.5 261.5 L533.5 259.5 L534.5 262.5 L535.5 259.5 L536.5 262.5 L537.5 259.5 L538.5 261.5 L539.5 261.5 L540.5 260.5 L541.5 262.5 L542.5 259.5 L543.5 262.5 L544.5 259.5 L545.5 261.5 L546.5 260.5 L547.5 260.5 L548.5 262.5 L549.5 259.5 L550.5 262.5 L551.5 259.5 L552.5 262.5 L553.5 260.5 L554.5 261.5 L555.5 261.5 L556.5 259.5 L557.5 262.5 L558.5 259.5 L559.5 262.5 L560.5 259.5 L561.5 261.5 L562.5 261.5 L563.5 260.5 L564.5 262.5 L565.5 259.5 L566.5 262.5 L567.5 259.5 L568.5 261.5 L569.5 260.5 L570.5 260.5 L571.5 261.5 L572.5 259.5 L573.5 262.5 L574.5 259.5 L575.5 262.5 L576.5 260.5 L577.5 261.5 L578.5 261.5 L579.5 259.5 L580.5 262.5 L581.5 259.5 L582.5 262.5 L583.5 260.5 L584.5 261.5 L585.5 261.5 L586.5 260.5 L587.5 262.5 L588.5 259.5 L589.5 262.5 L590.5 259.5 L591.5 261.5 L592.5 260.5 L593.5 260.5 L594.5 261.5 L595.5 259.5 L596.5 262.5 L597.5 259.5 L598.5 262.5 L599.5 260.5 L600.5 261.5 L601.5 261.5 L602.5 260.5 L603.5 262.5 L604.5 259.5 L605.5 262.5 L606.5 260.5 L607.5 261.5 L608.5 261.5 L609.5 260.5 L610.5 261.5 L611.5 259.5 L612.5 262.5 L613.5 259.5 L614.5 261.5 L615.5 260.5 L616.5 260.5 L617.5 261.5 L618.5 259.5 L619.5 262.5 L620.5 259.5 L621.5 262.5 L622.5 260.5 L623.5 261.5 L624.5 261.5 L625.5 260.5 L626.5 262.5 L627.5 259.5 L628.5 262.5 L629.5 260.5 L630.5 261.5 L631.5 260.5 L632.5 260.5 L633.5 261.5 L634.5 259.5 L635.5 262.5 L636.5 259.5 L637.5 261.5 L638.5 260.5 L639.5 260.5 L640.5 261.5 L641.5 260.5 L642.5 262.5 L643.5 259.5 L644.5 261.5 L645.5 260.5 L646.5 261.5 L647.5 261.5 L648.5 260.5 L649.5 262.5 L650.5 259.5 L651.5 262.5 L652.5 260.5 L653.5 261.5 L654.5 260.5 L655.5 260.5 L656.5 261.5 L657.5 259.5 L658.5 262.5 L659.5 259.5 L660.5 261.5 L661.5 260.5 L662.5 260.5 L663.5 261.5 L664.5 260.5 L665.5 262.5 L666.5 259.5 L667.5 261.5 L668.5 260.5 L669.5 261.5 L670.5 261.5 L671.5 260.5 L672.5 261.5 L673.5 259.5 L674.5 262.5 L675.5 260.5 L676.5 261.5 L677.5 260.5 L678.5 260.5 L679.5 261.5 L680.5 260.5 L681.5 262.5 L682.5 260.5 L683.5 261.5 L684.5 260.5 L685.5 260.5 L686.5 261.5 L687.5 260.5 L688.5 262.5 L689.5 259.5 L690.5 261.5 L691.5 260.5 L692.5 261.5 L693.5 261.5 L694.5 260.5 L695.5 261.5 L696.5 259.5 L697.5 262.5 L698.5 260.5 L699.5 261.5 L700.5 260.5 L701.5 260.5" stroke="#0000FF" fill="none" stroke-width="1" shape-rendering="crispEdges"/><g transform="translate(682,160)" fill="#FF00FF"><rect x="0" y="0" width="4.5" height="1"/><rect x="8.5" y="0" width="4.5" height="1"/><rect x="15" y="0" width="3" height="1"/><rect x="0" y="2" width="5" height="1"/><rect x="7" y="2" width="6" height="1"/><rect x="15" y="2" width="3" height="1"/><rect x="0" y="4" width="3" height="1"/><rect x="4" y="4" width="1.5" height="1"/><rect x="7.5" y="4" width="1.5" height="1"/><rect x="10" y="4" width="3" height="1"/><rect x="15" y="4" width="3" height="1"/><rect x="0" y="6" width="3" height="5"/><rect x="10" y="6" width="3" height="5"/><rect x="15" y="6" width="3" height="5"/><path d="M4 6H8L6.6 11H5.4Z"/></g><text x="58.5" y="160" font-family="Liberation Sans" font-weight="bold" font-size="11" fill="#0000FF" text-anchor="end" letter-spacing="0.3">1</text><text x="58.5" y="181" font-family="Liberation Sans" font-weight="bold" font-size="11" fill="#0000FF" text-anchor="end" letter-spacing="0.3">0.8</text><text x="58.5" y="202" font-family="Liberation Sans" font-weight="bold" font-size="11" fill="#0000FF" text-anchor="end" letter-spacing="0.3">0.6</text><text x="58.5" y="223" font-family="Liberation Sans" font-weight="bold" font-size="11" fill="#0000FF" text-anchor="end" letter-spacing="0.3">0.4</text><text x="58.5" y="244" font-family="Liberation Sans" font-weight="bold" font-size="11" fill="#0000FF" text-anchor="end" letter-spacing="0.3">0.2</text><text x="58.5" y="264" font-family="Liberation Sans" font-weight="bold" font-size="11" fill="#0000FF" text-anchor="end" letter-spacing="0.3">0</text><text x="58.5" y="285" font-family="Liberation Sans" font-weight="bold" font-size="11" fill="#0000FF" text-anchor="end" letter-spacing="0.3">-0.2</text><text x="58.5" y="306" font-family="Liberation Sans" font-weight="bold" font-size="11" fill="#0000FF" text-anchor="end" letter-spacing="0.3">-0.4</text><text x="58.5" y="327" font-family="Liberation Sans" font-weight="bold" font-size="11" fill="#0000FF" text-anchor="end" letter-spacing="0.3">-0.6</text><text x="58.5" y="348" font-family="Liberation Sans" font-weight="bold" font-size="11" fill="#0000FF" text-anchor="end" letter-spacing="0.3">-0.8</text><text x="58.5" y="369" font-family="Liberation Sans" font-weight="bold" font-size="11" fill="#0000FF" text-anchor="end" letter-spacing="0.3">-1</text><text x="62.2" y="379" font-family="Liberation Sans" font-weight="bold" font-size="11" fill="#000" text-anchor="middle" letter-spacing="1">0</text><text x="126.10000000000001" y="379" font-family="Liberation Sans" font-weight="bold" font-size="11" fill="#000" text-anchor="middle" letter-spacing="1">0.1</text><text x="190.0" y="379" font-family="Liberation Sans" font-weight="bold" font-size="11" fill="#000" text-anchor="middle" letter-spacing="1">0.2</text><text x="253.89999999999998" y="379" font-family="Liberation Sans" font-weight="bold" font-size="11" fill="#000" text-anchor="middle" letter-spacing="1">0.3</text><text x="317.8" y="379" font-family="Liberation Sans" font-weight="bold" font-size="11" fill="#000" text-anchor="middle" letter-spacing="1">0.4</text><text x="381.7" y="379" font-family="Liberation Sans" font-weight="bold" font-size="11" fill="#000" text-anchor="middle" letter-spacing="1">0.5</text><text x="445.59999999999997" y="379" font-family="Liberation Sans" font-weight="bold" font-size="11" fill="#000" text-anchor="middle" letter-spacing="1">0.6</text><text x="509.5" y="379" font-family="Liberation Sans" font-weight="bold" font-size="11" fill="#000" text-anchor="middle" letter-spacing="1">0.7</text><text x="573.4000000000001" y="379" font-family="Liberation Sans" font-weight="bold" font-size="11" fill="#000" text-anchor="middle" letter-spacing="1">0.8</text><text x="637.3000000000001" y="379" font-family="Liberation Sans" font-weight="bold" font-size="11" fill="#000" text-anchor="middle" letter-spacing="1">0.9</text><text x="701.2" y="379" font-family="Liberation Sans" font-weight="bold" font-size="11" fill="#000" text-anchor="middle" letter-spacing="1">1</text><text x="707" y="390" font-family="Liberation Sans" font-weight="bold" font-size="11" fill="#000" text-anchor="start" >s</text><text x="343.5" y="392" font-family="Liberation Sans" font-weight="bold" font-size="11" fill="#000" text-anchor="start" textLength="76" lengthAdjust="spacing" >WAVEFORM</text><text x="8" y="392" font-family="Liberation Sans" font-weight="bold" font-size="11" fill="#000" text-anchor="start" textLength="81" lengthAdjust="spacing" >+19:26:31:804</text><text x="32.5" y="139.5" font-family="Liberation Sans" font-weight="bold" font-size="11" fill="#0000FF" text-anchor="start" textLength="28.5" lengthAdjust="spacing" >A (V)</text><text x="120" y="139.5" font-family="Liberation Sans" font-weight="bold" font-size="11" fill="#0000FF" text-anchor="start" textLength="48" lengthAdjust="spacing" >A: Max=</text><text x="186" y="139.5" font-family="Liberation Sans" font-weight="bold" font-size="11" fill="#0000FF" text-anchor="start" textLength="38" lengthAdjust="spacing" >998.23</text><text x="232" y="139.5" font-family="Liberation Sans" font-weight="bold" font-size="11" fill="#0000FF" text-anchor="start" textLength="18.5" lengthAdjust="spacing" >mV</text><text x="259.5" y="139.5" font-family="Liberation Sans" font-weight="bold" font-size="11" fill="#0000FF" text-anchor="start" textLength="29.25" lengthAdjust="spacing" >Min=</text><text x="303.75" y="139.5" font-family="Liberation Sans" font-weight="bold" font-size="11" fill="#0000FF" text-anchor="start" textLength="40.75" lengthAdjust="spacing" >-994.81</text><text x="352.5" y="139.5" font-family="Liberation Sans" font-weight="bold" font-size="11" fill="#0000FF" text-anchor="start" textLength="18.75" lengthAdjust="spacing" >mV</text><text x="380.5" y="139.5" font-family="Liberation Sans" font-weight="bold" font-size="11" fill="#0000FF" text-anchor="start" textLength="39.5" lengthAdjust="spacing" >Mean=</text><text x="463.75" y="139.5" font-family="Liberation Sans" font-weight="bold" font-size="11" fill="#0000FF" text-anchor="start" textLength="18.75" lengthAdjust="spacing" >159</text><text x="493.75" y="139.5" font-family="Liberation Sans" font-weight="bold" font-size="11" fill="#0000FF" text-anchor="start" textLength="15" lengthAdjust="spacing" >µV</text><text x="518.75" y="139.5" font-family="Liberation Sans" font-weight="bold" font-size="11" fill="#0000FF" text-anchor="start" textLength="35" lengthAdjust="spacing" >RMS=</text><text x="572.5" y="139.5" font-family="Liberation Sans" font-weight="bold" font-size="11" fill="#0000FF" text-anchor="start" textLength="43.75" lengthAdjust="spacing" >190.229</text><text x="625" y="139.5" font-family="Liberation Sans" font-weight="bold" font-size="11" fill="#0000FF" text-anchor="start" textLength="18.75" lengthAdjust="spacing" >mV</text></svg>
<svg style="position:absolute;left:8px;top:436px" width="730" height="271" viewBox="8 436 730 271"><path d="M118.5 464V673" stroke="#00FF00" stroke-dasharray="3 3"/><path d="M152.5 464V673" stroke="#00FF00" stroke-dasharray="3 3"/><path d="M175.5 464V673" stroke="#00FF00" stroke-dasharray="3 3"/><path d="M194.5 464V673" stroke="#00FF00" stroke-dasharray="3 3"/><path d="M209.5 464V673" stroke="#00FF00" stroke-dasharray="3 3"/><path d="M222.5 464V673" stroke="#00FF00" stroke-dasharray="3 3"/><path d="M232.5 464V673" stroke="#00FF00" stroke-dasharray="3 3"/><path d="M242.5 464V673" stroke="#00FF00" stroke-dasharray="3 3"/><path d="M251.5 464V673" stroke="#00FF00" stroke-dasharray="3 3"/><path d="M308.5 464V673" stroke="#00FF00" stroke-dasharray="3 3"/><path d="M341.5 464V673" stroke="#00FF00" stroke-dasharray="3 3"/><path d="M365.5 464V673" stroke="#00FF00" stroke-dasharray="3 3"/><path d="M383.5 464V673" stroke="#00FF00" stroke-dasharray="3 3"/><path d="M398.5 464V673" stroke="#00FF00" stroke-dasharray="3 3"/><path d="M411.5 464V673" stroke="#00FF00" stroke-dasharray="3 3"/><path d="M422.5 464V673" stroke="#00FF00" stroke-dasharray="3 3"/><path d="M432.5 464V673" stroke="#00FF00" stroke-dasharray="3 3"/><path d="M440.5 464V673" stroke="#00FF00" stroke-dasharray="3 3"/><path d="M497.5 464V673" stroke="#00FF00" stroke-dasharray="3 3"/><path d="M531.5 464V673" stroke="#00FF00" stroke-dasharray="3 3"/><path d="M554.5 464V673" stroke="#00FF00" stroke-dasharray="3 3"/><path d="M573.5 464V673" stroke="#00FF00" stroke-dasharray="3 3"/><path d="M588.5 464V673" stroke="#00FF00" stroke-dasharray="3 3"/><path d="M600.5 464V673" stroke="#00FF00" stroke-dasharray="3 3"/><path d="M611.5 464V673" stroke="#00FF00" stroke-dasharray="3 3"/><path d="M621.5 464V673" stroke="#00FF00" stroke-dasharray="3 3"/><path d="M630.5 464V673" stroke="#00FF00" stroke-dasharray="3 3"/><path d="M687.5 464V673" stroke="#00FF00" stroke-dasharray="3 3"/><path d="M62 484.5H701" stroke="#00FF00" stroke-dasharray="3 3"/><path d="M62 505.5H701" stroke="#00FF00" stroke-dasharray="3 3"/><path d="M62 526.5H701" stroke="#00FF00" stroke-dasharray="3 3"/><path d="M62 547.5H701" stroke="#00FF00" stroke-dasharray="3 3"/><path d="M62 568.5H701" stroke="#00FF00" stroke-dasharray="3 3"/><path d="M62 589.5H701" stroke="#00FF00" stroke-dasharray="3 3"/><path d="M62 610.5H701" stroke="#00FF00" stroke-dasharray="3 3"/><path d="M62 631.5H701" stroke="#00FF00" stroke-dasharray="3 3"/><path d="M62 652.5H701" stroke="#00FF00" stroke-dasharray="3 3"/><rect x="62.5" y="464.5" width="639" height="209" fill="none" stroke="#00FF00"/><path d="M62.00 538.26 L62.50 538.26 L63.00 538.26 L63.50 538.26 L64.00 538.26 L64.50 538.26 L65.00 538.26 L65.50 538.26 L66.00 538.26 L66.50 538.26 L67.00 538.26 L67.50 538.26 L68.00 538.26 L68.50 538.26 L69.00 538.26 L69.51 538.26 L70.01 538.26 L70.51 538.26 L71.01 538.26 L71.51 538.26 L72.01 538.26 L72.51 538.26 L73.01 538.26 L73.51 538.26 L74.01 538.26 L74.51 538.26 L75.01 538.26 L75.51 538.26 L76.01 538.26 L76.51 538.26 L77.01 538.26 L77.51 538.26 L78.01 538.26 L78.51 538.26 L79.01 538.26 L79.51 538.26 L80.01 538.26 L80.51 538.26 L81.01 538.26 L81.51 538.26 L82.01 538.26 L82.51 538.26 L83.01 538.26 L83.51 538.26 L84.01 538.26 L84.52 538.26 L85.02 538.26 L85.52 538.26 L86.02 538.26 L86.52 538.26 L87.02 538.26 L87.52 538.26 L88.02 538.26 L88.52 538.26 L89.02 538.26 L89.52 538.26 L90.02 538.26 L90.52 538.26 L91.02 538.26 L91.52 538.26 L92.02 538.26 L92.52 538.26 L93.02 538.26 L93.52 538.26 L94.02 538.26 L94.52 538.26 L95.02 538.26 L95.52 538.26 L96.02 538.26 L96.52 538.26 L97.02 538.26 L97.52 538.26 L98.02 538.26 L98.52 538.26 L99.03 538.26 L99.53 538.26 L100.03 538.26 L100.53 538.26 L101.03 538.26 L101.53 538.26 L102.03 538.26 L102.53 538.26 L103.03 538.26 L103.53 538.26 L104.03 538.26 L104.53 538.26 L105.03 538.26 L105.53 538.26 L106.03 538.26 L106.53 538.26 L107.03 538.26 L107.53 538.26 L108.03 538.26 L108.53 538.26 L109.03 538.26 L109.53 538.26 L110.03 538.26 L110.53 538.26 L111.03 538.26 L111.53 538.26 L112.03 538.26 L112.53 538.26 L113.03 538.26 L113.53 538.26 L114.04 538.26 L114.54 538.26 L115.04 538.26 L115.54 538.26 L116.04 538.26 L116.54 538.26 L117.04 538.26 L117.54 538.26 L118.04 538.26 L118.54 538.26 L119.04 538.26 L119.54 538.26 L120.04 538.26 L120.54 538.26 L121.04 538.26 L121.54 538.26 L122.04 538.26 L122.54 538.26 L123.04 538.26 L123.54 538.26 L124.04 538.26 L124.54 538.26 L125.04 538.26 L125.54 538.26 L126.04 538.26 L126.54 538.26 L127.04 538.26 L127.54 538.26 L128.04 538.26 L128.54 538.26 L129.05 538.26 L129.55 538.26 L130.05 538.26 L130.55 538.26 L131.05 538.26 L131.55 538.26 L132.05 538.26 L132.55 538.26 L133.05 538.26 L133.55 538.26 L134.05 538.26 L134.55 538.26 L135.05 538.26 L135.55 538.26 L136.05 538.26 L136.55 538.26 L137.05 538.26 L137.55 538.26 L138.05 538.26 L138.55 538.26 L139.05 538.26 L139.55 538.26 L140.05 538.26 L140.55 538.26 L141.05 538.26 L141.55 538.26 L142.05 538.26 L142.55 538.26 L143.05 538.26 L143.56 538.26 L144.06 538.26 L144.56 538.26 L145.06 538.26 L145.56 538.26 L146.06 538.26 L146.56 538.26 L147.06 538.26 L147.56 538.26 L148.06 538.26 L148.56 538.26 L149.06 538.26 L149.56 538.26 L150.06 538.26 L150.56 538.26 L151.06 538.26 L151.56 538.26 L152.06 538.26 L152.56 538.26 L153.06 538.26 L153.56 538.26 L154.06 538.26 L154.56 538.26 L155.06 538.26 L155.56 538.26 L156.06 538.26 L156.56 538.26 L157.06 538.26 L157.56 538.26 L158.06 538.26 L158.57 538.26 L159.07 538.26 L159.57 538.26 L160.07 538.26 L160.57 538.26 L161.07 538.26 L161.57 538.26 L162.07 538.26 L162.57 538.26 L163.07 538.26 L163.57 538.26 L164.07 538.26 L164.57 538.26 L165.07 538.26 L165.57 538.26 L166.07 538.26 L166.57 538.26 L167.07 538.26 L167.57 538.26 L168.07 538.26 L168.57 538.26 L169.07 538.26 L169.57 538.26 L170.07 538.26 L170.57 538.26 L171.07 538.26 L171.57 538.26 L172.07 538.26 L172.57 538.26 L173.08 538.26 L173.58 538.26 L174.08 538.26 L174.58 538.26 L175.08 538.26 L175.58 538.26 L176.08 538.26 L176.58 538.26 L177.08 538.26 L177.58 538.26 L178.08 538.26 L178.58 538.26 L179.08 538.26 L179.58 538.26 L180.08 538.26 L180.58 538.26 L181.08 538.26 L181.58 538.26 L182.08 538.26 L182.58 538.26 L183.08 538.26 L183.58 538.26 L184.08 538.26 L184.58 538.26 L185.08 538.26 L185.58 538.26 L186.08 538.26 L186.58 538.26 L187.08 538.26 L187.58 538.26 L188.09 538.26 L188.59 538.26 L189.09 538.26 L189.59 538.26 L190.09 538.26 L190.59 538.26 L191.09 538.26 L191.59 538.26 L192.09 538.26 L192.59 538.26 L193.09 538.26 L193.59 538.26 L194.09 538.26 L194.59 538.26 L195.09 538.26 L195.59 538.26 L196.09 538.26 L196.59 538.26 L197.09 538.26 L197.59 538.26 L198.09 538.26 L198.59 538.26 L199.09 538.26 L199.59 538.26 L200.09 538.26 L200.59 538.26 L201.09 538.26 L201.59 538.26 L202.09 538.26 L202.59 538.26 L203.10 538.26 L203.60 538.26 L204.10 538.26 L204.60 538.26 L205.10 538.26 L205.60 538.26 L206.10 538.26 L206.60 538.26 L207.10 538.26 L207.60 538.26 L208.10 538.26 L208.60 538.26 L209.10 538.26 L209.60 538.26 L210.10 538.26 L210.60 538.26 L211.10 538.26 L211.60 538.26 L212.10 538.26 L212.60 538.26 L213.10 538.26 L213.60 538.26 L214.10 538.26 L214.60 538.26 L215.10 538.26 L215.60 538.26 L216.10 538.26 L216.60 538.26 L217.10 538.26 L217.61 538.26 L218.11 538.26 L218.61 538.26 L219.11 538.26 L219.61 538.26 L220.11 538.26 L220.61 538.26 L221.11 538.26 L221.61 538.26 L222.11 538.26 L222.61 538.26 L223.11 538.26 L223.61 538.26 L224.11 538.26 L224.61 538.26 L225.11 538.26 L225.61 538.26 L226.11 538.26 L226.61 538.26 L227.11 538.26 L227.61 538.26 L228.11 538.26 L228.61 538.26 L229.11 538.26 L229.61 538.26 L230.11 538.26 L230.61 538.26 L231.11 538.26 L231.61 538.26 L232.11 538.26 L232.62 538.26 L233.12 538.26 L233.62 538.26 L234.12 538.26 L234.62 538.26 L235.12 538.26 L235.62 538.26 L236.12 538.26 L236.62 538.26 L237.12 538.26 L237.62 538.26 L238.12 538.26 L238.62 538.26 L239.12 538.26 L239.62 538.26 L240.12 538.26 L240.62 538.26 L241.12 538.26 L241.62 538.26 L242.12 538.26 L242.62 538.26 L243.12 538.26 L243.62 538.26 L244.12 538.26 L244.62 538.26 L245.12 538.26 L245.62 538.26 L246.12 538.26 L246.62 538.26 L247.13 538.26 L247.63 538.26 L248.13 538.26 L248.63 538.26 L249.13 538.26 L249.63 538.26 L250.13 538.26 L250.63 538.26 L251.13 538.26 L251.63 538.26 L252.13 538.26 L252.63 538.26 L253.13 538.26 L253.63 538.26 L254.13 538.26 L254.63 538.26 L255.13 538.26 L255.63 538.26 L256.13 538.26 L256.63 538.26 L257.13 538.26 L257.63 538.26 L258.13 538.26 L258.63 538.26 L259.13 538.26 L259.63 538.26 L260.13 538.26 L260.63 538.26 L261.13 538.26 L261.63 538.26 L262.14 538.26 L262.64 538.26 L263.14 538.26 L263.64 538.26 L264.14 538.26 L264.64 538.26 L265.14 538.26 L265.64 538.26 L266.14 538.26 L266.64 538.26 L267.14 538.26 L267.64 538.26 L268.14 538.26 L268.64 538.26 L269.14 538.26 L269.64 538.26 L270.14 538.26 L270.64 538.26 L271.14 538.26 L271.64 538.26 L272.14 538.26 L272.64 538.26 L273.14 538.26 L273.64 538.26 L274.14 538.26 L274.64 538.26 L275.14 538.26 L275.64 538.26 L276.14 538.26 L276.64 538.26 L277.15 538.26 L277.65 538.26 L278.15 538.26 L278.65 538.26 L279.15 538.26 L279.65 538.26 L280.15 538.26 L280.65 538.26 L281.15 538.26 L281.65 538.26 L282.15 538.26 L282.65 538.26 L283.15 538.26 L283.65 538.26 L284.15 538.26 L284.65 538.26 L285.15 538.26 L285.65 538.26 L286.15 538.26 L286.65 538.26 L287.15 538.26 L287.65 538.26 L288.15 538.26 L288.65 538.26 L289.15 538.26 L289.65 538.26 L290.15 538.26 L290.65 538.26 L291.15 538.26 L291.66 538.26 L292.16 538.26 L292.66 538.26 L293.16 538.26 L293.66 538.26 L294.16 538.26 L294.66 538.26 L295.16 538.26 L295.66 538.26 L296.16 538.26 L296.66 538.26 L297.16 538.26 L297.66 538.26 L298.16 538.26 L298.66 538.26 L299.16 538.26 L299.66 538.26 L300.16 538.26 L300.66 538.26 L301.16 538.26 L301.66 538.26 L302.16 538.26 L302.66 538.26 L303.16 538.26 L303.66 538.26 L304.16 538.26 L304.66 538.26 L305.16 538.26 L305.66 538.26 L306.16 538.26 L306.67 538.26 L307.17 538.26 L307.67 538.26 L308.17 538.26 L308.67 538.26 L309.17 538.26 L309.67 538.26 L310.17 538.26 L310.67 538.26 L311.17 538.26 L311.67 538.26 L312.17 538.26 L312.67 538.26 L313.17 538.26 L313.67 538.26 L314.17 538.26 L314.67 538.26 L315.17 538.26 L315.67 538.26 L316.17 538.26 L316.67 538.26 L317.17 538.26 L317.67 538.26 L318.17 538.26 L318.67 538.26 L319.17 538.26 L319.67 538.26 L320.17 538.26 L320.67 538.26 L321.18 538.26 L321.68 538.26 L322.18 538.26 L322.68 538.26 L323.18 538.26 L323.68 538.26 L324.18 538.26 L324.68 538.26 L325.18 538.26 L325.68 538.26 L326.18 538.26 L326.68 538.26 L327.18 538.26 L327.68 538.26 L328.18 538.26 L328.69 538.26 L329.19 538.26 L329.69 538.26 L330.19 538.25 L330.69 538.25 L331.20 538.24 L331.70 538.24 L332.20 538.23 L332.70 538.23 L333.20 538.22 L333.71 538.22 L334.21 538.21 L334.71 538.20 L335.21 538.20 L335.71 538.19 L336.22 538.18 L336.72 538.17 L337.22 538.16 L337.72 538.15 L338.22 538.14 L338.72 538.13 L339.23 538.12 L339.73 538.11 L340.23 538.10 L340.73 538.09 L341.23 538.08 L341.74 538.06 L342.24 538.05 L342.74 538.04 L343.24 538.03 L343.74 538.01 L344.25 538.00 L344.75 537.99 L345.25 537.97 L345.75 537.96 L346.25 537.94 L346.76 537.93 L347.26 537.91 L347.76 537.90 L348.26 537.88 L348.76 537.87 L349.26 537.85 L349.77 537.83 L350.27 537.82 L350.77 537.80 L351.27 537.79 L351.77 537.77 L352.28 537.75 L352.78 537.74 L353.28 537.72 L353.78 537.70 L354.28 537.68 L354.79 537.67 L355.29 537.65 L355.79 537.63 L356.29 537.61 L356.79 537.60 L357.30 537.58 L357.80 537.56 L358.30 537.54 L358.80 537.52 L359.30 537.51 L359.80 537.49 L360.31 537.47 L360.81 537.45 L361.31 537.43 L361.81 537.42 L362.31 537.40 L362.82 537.38 L363.32 537.36 L363.82 537.34 L364.32 537.33 L364.82 537.31 L365.33 537.29 L365.84 537.27 L366.35 537.25 L366.85 537.23 L367.36 537.21 L367.87 537.19 L368.38 537.17 L368.89 537.15 L369.40 537.13 L369.91 537.11 L370.42 537.09 L370.93 537.07 L371.44 537.05 L371.95 537.02 L372.46 537.00 L372.97 536.98 L373.48 536.95 L373.99 536.93 L374.50 536.90 L375.01 536.87 L375.52 536.85 L376.03 536.82 L376.54 536.79 L377.05 536.76 L377.56 536.73 L378.07 536.70 L378.58 536.67 L379.09 536.64 L379.60 536.61 L380.11 536.57 L380.62 536.54 L381.13 536.50 L381.64 536.47 L382.15 536.43 L382.65 536.39 L383.16 536.35 L383.67 536.31 L384.19 536.27 L384.70 536.23 L385.21 536.18 L385.72 536.13 L386.23 536.08 L386.74 536.03 L387.25 535.97 L387.76 535.91 L388.27 535.85 L388.78 535.79 L389.29 535.72 L389.81 535.65 L390.32 535.58 L390.83 535.51 L391.34 535.44 L391.85 535.36 L392.36 535.28 L392.87 535.21 L393.38 535.13 L393.89 535.04 L394.40 534.96 L394.92 534.87 L395.43 534.79 L395.94 534.70 L396.45 534.61 L396.96 534.52 L397.47 534.42 L397.98 534.33 L398.49 534.24 L399.00 534.14 L399.51 534.04 L400.03 533.95 L400.54 533.84 L401.05 533.74 L401.57 533.63 L402.08 533.52 L402.60 533.41 L403.11 533.29 L403.63 533.17 L404.14 533.05 L404.65 532.92 L405.17 532.79 L405.68 532.65 L406.20 532.51 L406.71 532.37 L407.23 532.22 L407.74 532.07 L408.26 531.91 L408.77 531.75 L409.28 531.58 L409.80 531.41 L410.31 531.24 L410.83 531.06 L411.34 530.88 L411.86 530.69 L412.39 530.48 L412.91 530.27 L413.43 530.05 L413.96 529.82 L414.48 529.58 L415.00 529.34 L415.52 529.08 L416.05 528.82 L416.57 528.54 L417.09 528.26 L417.62 527.97 L418.14 527.67 L418.66 527.37 L419.18 527.06 L419.71 526.74 L420.23 526.41 L420.75 526.07 L421.28 525.73 L421.80 525.38 L422.32 525.03 L422.83 524.67 L423.34 524.31 L423.85 523.94 L424.36 523.56 L424.87 523.16 L425.38 522.75 L425.89 522.33 L426.40 521.90 L426.91 521.44 L427.42 520.97 L427.93 520.49 L428.44 519.98 L428.95 519.46 L429.46 518.91 L429.97 518.34 L430.48 517.75 L430.99 517.14 L431.50 516.50 L432.01 515.83 L432.56 515.07 L433.12 514.25 L433.67 513.35 L434.23 512.36 L434.78 511.27 L435.34 510.05 L435.90 508.70 L436.45 507.19 L436.99 505.44 L437.52 503.23 L438.05 500.56 L438.59 497.44 L439.13 493.41 L439.68 487.69 L440.01 482.46 L440.34 475.15 L440.50 469.93 L440.67 464.00 M440.67 464.00 L440.79 476.56 L440.92 486.29 L441.20 496.20 L441.49 501.62 L442.09 507.73 L442.70 511.37 L443.29 514.13 L443.89 516.38 L444.48 518.22 L445.07 519.73 L445.59 520.89 L446.12 521.92 L446.64 522.85 L447.16 523.70 L447.68 524.49 L448.21 525.24 L448.73 525.97 L449.25 526.70 L449.79 527.45 L450.32 528.18 L450.85 528.90 L451.39 529.60 L451.92 530.28 L452.46 530.94 L452.99 531.58 L453.52 532.19 L454.06 532.78 L454.59 533.34 L455.13 533.87 L455.66 534.36 L456.18 534.83 L456.71 535.27 L457.23 535.71 L457.75 536.13 L458.27 536.53 L458.80 536.93 L459.32 537.31 L459.84 537.68 L460.36 538.03 L460.89 538.38 L461.41 538.71 L461.93 539.03 L462.45 539.34 L462.98 539.65 L463.50 539.94 L464.00 540.21 L464.50 540.47 L465.00 540.73 L465.50 540.98 L466.00 541.22 L466.50 541.46 L467.00 541.69 L467.50 541.92 L468.00 542.14 L468.50 542.36 L469.00 542.57 L469.51 542.78 L470.01 542.99 L470.51 543.19 L471.01 543.39 L471.51 543.58 L472.01 543.78 L472.51 543.97 L473.01 544.16 L473.51 544.35 L474.01 544.53 L474.51 544.72 L475.02 544.90 L475.52 545.09 L476.02 545.26 L476.53 545.44 L477.03 545.61 L477.53 545.79 L478.04 545.96 L478.54 546.12 L479.04 546.29 L479.55 546.45 L480.05 546.62 L480.55 546.78 L481.06 546.94 L481.56 547.09 L482.06 547.25 L482.57 547.41 L483.07 547.56 L483.57 547.71 L484.08 547.87 L484.58 548.02 L485.08 548.17 L485.59 548.32 L486.09 548.47 L486.59 548.61 L487.10 548.76 L487.60 548.91 L488.10 549.06 L488.61 549.20 L489.11 549.35 L489.61 549.50 L490.12 549.65 L490.62 549.79 L491.12 549.94 L491.63 550.09 L492.13 550.24 L492.63 550.38 L493.14 550.53 L493.64 550.68 L494.14 550.83 L494.65 550.99 L495.15 551.14 L495.65 551.29 L496.16 551.45 L496.66 551.60 L497.16 551.76 L497.67 551.92 L498.17 552.08 L498.68 552.24 L499.18 552.40 L499.69 552.56 L500.19 552.72 L500.70 552.88 L501.20 553.04 L501.71 553.20 L502.21 553.36 L502.72 553.52 L503.22 553.68 L503.73 553.85 L504.23 554.01 L504.74 554.17 L505.24 554.33 L505.75 554.49 L506.25 554.65 L506.76 554.81 L507.26 554.97 L507.77 555.14 L508.27 555.30 L508.78 555.46 L509.28 555.62 L509.79 555.78 L510.29 555.95 L510.80 556.11 L511.30 556.27 L511.81 556.43 L512.31 556.59 L512.82 556.76 L513.32 556.92 L513.83 557.08 L514.34 557.24 L514.84 557.41 L515.35 557.57 L515.85 557.73 L516.36 557.90 L516.86 558.06 L517.37 558.22 L517.87 558.39 L518.38 558.55 L518.88 558.71 L519.39 558.87 L519.89 559.04 L520.40 559.20 L520.90 559.37 L521.41 559.53 L521.91 559.69 L522.42 559.86 L522.92 560.02 L523.43 560.18 L523.93 560.35 L524.44 560.51 L524.94 560.68 L525.45 560.84 L525.95 561.00 L526.46 561.17 L526.96 561.33 L527.47 561.50 L527.97 561.66 L528.48 561.83 L528.98 561.99 L529.49 562.15 L530.00 562.32 L530.50 562.48 L531.01 562.65 L531.51 562.81 L532.01 562.98 L532.52 563.14 L533.02 563.31 L533.52 563.48 L534.03 563.64 L534.53 563.81 L535.03 563.98 L535.54 564.15 L536.04 564.32 L536.54 564.48 L537.05 564.65 L537.55 564.82 L538.05 564.99 L538.55 565.16 L539.06 565.33 L539.56 565.50 L540.06 565.67 L540.57 565.84 L541.07 566.01 L541.57 566.18 L542.08 566.35 L542.58 566.52 L543.08 566.69 L543.59 566.86 L544.09 567.03 L544.59 567.20 L545.10 567.37 L545.60 567.53 L546.10 567.70 L546.61 567.87 L547.11 568.03 L547.61 568.20 L548.12 568.37 L548.62 568.53 L549.12 568.70 L549.63 568.86 L550.13 569.02 L550.63 569.18 L551.14 569.35 L551.64 569.51 L552.14 569.67 L552.65 569.82 L553.15 569.98 L553.65 570.14 L554.16 570.30 L554.66 570.45 L555.17 570.61 L555.68 570.76 L556.19 570.92 L556.70 571.07 L557.21 571.22 L557.72 571.37 L558.23 571.52 L558.74 571.67 L559.25 571.82 L559.76 571.97 L560.27 572.11 L560.78 572.26 L561.29 572.41 L561.80 572.55 L562.31 572.70 L562.82 572.84 L563.33 572.99 L563.83 573.13 L564.34 573.28 L564.85 573.42 L565.36 573.56 L565.87 573.71 L566.38 573.85 L566.89 573.99 L567.40 574.14 L567.91 574.28 L568.42 574.43 L568.93 574.57 L569.44 574.72 L569.95 574.86 L570.46 575.01 L570.97 575.15 L571.48 575.30 L571.99 575.45 L572.50 575.60 L573.01 575.75 L573.51 575.89 L574.02 576.04 L574.52 576.19 L575.02 576.34 L575.52 576.48 L576.03 576.63 L576.53 576.78 L577.03 576.93 L577.54 577.08 L578.04 577.23 L578.54 577.38 L579.05 577.53 L579.55 577.68 L580.05 577.83 L580.55 577.98 L581.06 578.13 L581.56 578.28 L582.06 578.43 L582.57 578.58 L583.07 578.73 L583.57 578.88 L584.08 579.03 L584.58 579.19 L585.08 579.34 L585.59 579.49 L586.09 579.64 L586.59 579.79 L587.09 579.94 L587.60 580.09 L588.10 580.24 L588.60 580.39 L589.11 580.54 L589.61 580.70 L590.11 580.85 L590.62 581.00 L591.12 581.15 L591.62 581.30 L592.12 581.45 L592.63 581.60 L593.13 581.75 L593.63 581.90 L594.14 582.05 L594.64 582.20 L595.14 582.34 L595.65 582.49 L596.15 582.64 L596.65 582.79 L597.15 582.94 L597.66 583.09 L598.16 583.23 L598.66 583.38 L599.17 583.53 L599.67 583.67 L600.17 583.82 L600.68 583.97 L601.18 584.11 L601.68 584.26 L602.19 584.40 L602.69 584.55 L603.20 584.69 L603.70 584.84 L604.20 584.98 L604.71 585.12 L605.21 585.27 L605.72 585.41 L606.22 585.55 L606.72 585.69 L607.23 585.84 L607.73 585.98 L608.24 586.12 L608.74 586.26 L609.24 586.40 L609.75 586.55 L610.25 586.69 L610.76 586.83 L611.26 586.97 L611.76 587.11 L612.27 587.25 L612.77 587.39 L613.28 587.54 L613.78 587.68 L614.28 587.82 L614.79 587.96 L615.29 588.10 L615.80 588.24 L616.30 588.39 L616.80 588.53 L617.31 588.67 L617.81 588.81 L618.32 588.96 L618.82 589.10 L619.32 589.24 L619.83 589.39 L620.33 589.53 L620.84 589.67 L621.34 589.82 L621.85 589.97 L622.36 590.12 L622.87 590.27 L623.38 590.43 L623.89 590.59 L624.40 590.75 L624.91 590.91 L625.42 591.07 L625.93 591.22 L626.44 591.38 L626.95 591.53 L627.46 591.67 L627.97 591.82 L628.48 591.95 L628.99 592.09 L629.49 592.21 L630.00 592.33 L630.51 592.44 L631.01 592.54 L631.52 592.65 L632.03 592.75 L632.53 592.86 L633.04 592.96 L633.54 593.06 L634.05 593.15 L634.55 593.25 L635.06 593.34 L635.56 593.43 L636.07 593.52 L636.57 593.61 L637.08 593.70 L637.58 593.79 L638.09 593.87 L638.59 593.95 L639.10 594.04 L639.60 594.12 L640.11 594.20 L640.61 594.28 L641.12 594.35 L641.62 594.43 L642.13 594.51 L642.63 594.58 L643.14 594.66 L643.64 594.73 L644.15 594.81 L644.65 594.88 L645.16 594.95 L645.66 595.03 L646.17 595.10 L646.67 595.17 L647.18 595.24 L647.68 595.31 L648.19 595.38 L648.70 595.45 L649.20 595.53 L649.71 595.60 L650.21 595.67 L650.72 595.74 L651.22 595.81 L651.73 595.88 L652.23 595.96 L652.74 596.03 L653.24 596.10 L653.75 596.18 L654.25 596.25 L654.76 596.33 L655.26 596.40 L655.77 596.48 L656.27 596.56 L656.78 596.63 L657.28 596.71 L657.79 596.79 L658.29 596.87 L658.80 596.96 L659.30 597.04 L659.81 597.13 L660.31 597.21 L660.82 597.30 L661.32 597.39 L661.83 597.48 L662.33 597.57 L662.84 597.66 L663.34 597.76 L663.85 597.86 L664.35 597.96 L664.85 598.06 L665.36 598.17 L665.86 598.28 L666.36 598.39 L666.87 598.50 L667.37 598.62 L667.87 598.74 L668.38 598.86 L668.88 598.98 L669.38 599.10 L669.89 599.22 L670.39 599.35 L670.89 599.48 L671.40 599.60 L671.90 599.73 L672.40 599.86 L672.91 599.99 L673.41 600.12 L673.91 600.25 L674.42 600.37 L674.92 600.50 L675.42 600.63 L675.93 600.76 L676.43 600.88 L676.93 601.01 L677.44 601.13 L677.94 601.26 L678.44 601.38 L678.95 601.50 L679.45 601.62 L679.95 601.73 L680.46 601.85 L680.96 601.96 L681.46 602.07 L681.97 602.17 L682.47 602.28 L682.97 602.38 L683.48 602.47 L683.98 602.57 L684.48 602.66 L684.99 602.75 L685.49 602.83 L685.99 602.91 L686.50 602.98 L687.00 603.05 L687.52 603.12 L688.03 603.19 L688.55 603.26 L689.07 603.32 L689.58 603.38 L690.10 603.44 L690.62 603.50 L691.14 603.55 L691.65 603.61 L692.17 603.66 L692.69 603.71 L693.20 603.76 L693.72 603.81 L694.24 603.86 L694.75 603.91 L695.27 603.96 L695.79 604.00 L696.31 604.05 L696.82 604.10 L697.34 604.15 L697.86 604.19 L698.37 604.24 L698.89 604.29 L699.41 604.34 L699.92 604.38 L700.44 604.43 L700.96 604.48 L701.47 604.54 L701.99 604.59" stroke="#0000FF" fill="none" stroke-width="1.1"/><path d="M441 465V491.8666666666667" stroke="#0000FF" stroke-width="1"/><path d="M615.5 587.9V588.9M616.5 588.1V589.2M617.5 588.4V589.5M618.5 588.7V589.8M619.5 588.9V590.1M620.5 589.2V590.4M621.5 589.5V590.7M622.5 589.7V591.0M623.5 590.0V591.3M624.5 590.3V591.6M625.5 590.6V592.0M626.5 590.9V592.3M627.5 591.2V592.6M628.5 591.4V592.9M629.5 591.7V593.2M630.5 591.9V593.4M631.5 592.1V593.6M632.5 592.3V593.8M633.5 592.4V594.1M634.5 592.6V594.3M635.5 592.8V594.5M636.5 592.9V594.7M637.5 593.1V594.9M638.5 593.2V595.0M639.5 593.4V595.2M640.5 593.5V595.4M641.5 593.7V595.6M642.5 593.8V595.7M643.5 593.9V595.9M644.5 594.1V596.1M645.5 594.2V596.2M646.5 594.3V596.4M647.5 594.4V596.5M648.5 594.6V596.7M649.5 594.7V596.9M650.5 594.8V597.0M651.5 594.9V597.2M652.5 595.0V597.3M653.5 595.2V597.5M654.5 595.3V597.7M655.5 595.4V597.8M656.5 595.6V598.0M657.5 595.7V598.2M658.5 595.9V598.4M659.5 596.0V598.5M660.5 596.2V598.7M661.5 596.3V598.9M662.5 596.5V599.1M663.5 596.7V599.3M664.5 596.8V599.5M665.5 597.0V599.8M666.5 597.2V600.0M667.5 597.4V600.3M668.5 597.7V600.5M669.5 597.9V600.8M670.5 598.1V601.0M671.5 598.4V601.3M672.5 598.6V601.6M673.5 598.8V601.9M674.5 599.1V602.1M675.5 599.3V602.4M676.5 599.5V602.7M677.5 599.8V602.9M678.5 600.0V603.2M679.5 600.2V603.4M680.5 600.4V603.7M681.5 600.6V603.9M682.5 600.8V604.2M683.5 601.0V604.4M684.5 601.2V604.6M685.5 601.3V604.8M686.5 601.4V604.9M687.5 601.6V605.1M688.5 601.7V605.2M689.5 601.8V605.4M690.5 601.9V605.5M691.5 602.0V605.6M692.5 602.0V605.7M693.5 602.1V605.9M694.5 602.2V606.0M695.5 602.3V606.1M696.5 602.4V606.2M697.5 602.4V606.3M698.5 602.5V606.4M699.5 602.6V606.5M700.5 602.7V606.6M701.5 602.7V606.7" stroke="#0000FF" stroke-width="1"/><path d="M573.5 571.9V579.9" stroke="#0000FF"/><path d="M601.5 580.2V588.2" stroke="#0000FF"/><path d="M621.5 585.9V593.9" stroke="#0000FF"/><path d="M638.5 589.9V597.9" stroke="#0000FF"/><path d="M652.5 592.0V600.0" stroke="#0000FF"/><path d="M663.5 593.8V601.8" stroke="#0000FF"/><path d="M674.5 596.4V604.4" stroke="#0000FF"/><path d="M683.5 598.5V606.5" stroke="#0000FF"/><g transform="translate(682,468)" fill="#FF00FF"><rect x="0" y="0" width="4.5" height="1"/><rect x="8.5" y="0" width="4.5" height="1"/><rect x="15" y="0" width="3" height="1"/><rect x="0" y="2" width="5" height="1"/><rect x="7" y="2" width="6" height="1"/><rect x="15" y="2" width="3" height="1"/><rect x="0" y="4" width="3" height="1"/><rect x="4" y="4" width="1.5" height="1"/><rect x="7.5" y="4" width="1.5" height="1"/><rect x="10" y="4" width="3" height="1"/><rect x="15" y="4" width="3" height="1"/><rect x="0" y="6" width="3" height="5"/><rect x="10" y="6" width="3" height="5"/><rect x="15" y="6" width="3" height="5"/><path d="M4 6H8L6.6 11H5.4Z"/></g><text x="59" y="468.5" font-family="Liberation Sans" font-weight="bold" font-size="11" fill="#0000FF" text-anchor="end" letter-spacing="0.5">0</text><text x="59" y="489.5" font-family="Liberation Sans" font-weight="bold" font-size="11" fill="#0000FF" text-anchor="end" letter-spacing="0.5">-15</text><text x="59" y="510.5" font-family="Liberation Sans" font-weight="bold" font-size="11" fill="#0000FF" text-anchor="end" letter-spacing="0.5">-30</text><text x="59" y="531.5" font-family="Liberation Sans" font-weight="bold" font-size="11" fill="#0000FF" text-anchor="end" letter-spacing="0.5">-45</text><text x="59" y="552.5" font-family="Liberation Sans" font-weight="bold" font-size="11" fill="#0000FF" text-anchor="end" letter-spacing="0.5">-60</text><text x="59" y="572.5" font-family="Liberation Sans" font-weight="bold" font-size="11" fill="#0000FF" text-anchor="end" letter-spacing="0.5">-75</text><text x="59" y="593.5" font-family="Liberation Sans" font-weight="bold" font-size="11" fill="#0000FF" text-anchor="end" letter-spacing="0.5">-90</text><text x="59" y="614.5" font-family="Liberation Sans" font-weight="bold" font-size="11" fill="#0000FF" text-anchor="end" letter-spacing="0.5">-105</text><text x="59" y="635.5" font-family="Liberation Sans" font-weight="bold" font-size="11" fill="#0000FF" text-anchor="end" letter-spacing="0.5">-120</text><text x="59" y="656.5" font-family="Liberation Sans" font-weight="bold" font-size="11" fill="#0000FF" text-anchor="end" letter-spacing="0.5">-135</text><text x="59" y="677.5" font-family="Liberation Sans" font-weight="bold" font-size="11" fill="#0000FF" text-anchor="end" letter-spacing="0.5">-150</text><text x="63" y="687" font-family="Liberation Sans" font-weight="bold" font-size="11" fill="#000" text-anchor="middle" letter-spacing="0.5">10</text><text x="120" y="687" font-family="Liberation Sans" font-weight="bold" font-size="11" fill="#000" text-anchor="middle" letter-spacing="0.5">20</text><text x="195" y="687" font-family="Liberation Sans" font-weight="bold" font-size="11" fill="#000" text-anchor="middle" letter-spacing="0.5">50</text><text x="252" y="687" font-family="Liberation Sans" font-weight="bold" font-size="11" fill="#000" text-anchor="middle" letter-spacing="0.5">100</text><text x="309" y="687" font-family="Liberation Sans" font-weight="bold" font-size="11" fill="#000" text-anchor="middle" letter-spacing="0.5">200</text><text x="385" y="687" font-family="Liberation Sans" font-weight="bold" font-size="11" fill="#000" text-anchor="middle" letter-spacing="0.5">500</text><text x="442" y="687" font-family="Liberation Sans" font-weight="bold" font-size="11" fill="#000" text-anchor="middle" letter-spacing="0.5">1k</text><text x="499" y="687" font-family="Liberation Sans" font-weight="bold" font-size="11" fill="#000" text-anchor="middle" letter-spacing="0.5">2k</text><text x="574" y="687" font-family="Liberation Sans" font-weight="bold" font-size="11" fill="#000" text-anchor="middle" letter-spacing="0.5">5k</text><text x="631" y="687" font-family="Liberation Sans" font-weight="bold" font-size="11" fill="#000" text-anchor="middle" letter-spacing="0.5">10k</text><text x="688" y="687" font-family="Liberation Sans" font-weight="bold" font-size="11" fill="#000" text-anchor="middle" letter-spacing="0.5">20k</text><text x="709" y="700" font-family="Liberation Sans" font-weight="bold" font-size="11" fill="#000" text-anchor="start" textLength="15" lengthAdjust="spacing" >Hz</text><rect x="10" y="689" width="84" height="14" fill="#000"/><text x="11" y="700.5" font-family="Liberation Sans" font-weight="bold" font-size="11" fill="#fff" text-anchor="start" textLength="82" lengthAdjust="spacing" >Zero Padding</text><text x="107" y="700.5" font-family="Liberation Sans" font-weight="bold" font-size="11" fill="#000" text-anchor="start" textLength="395" lengthAdjust="spacing" >Resolution: 0.0228882Hz NORMALIZED AMPLITUDE SPECTRUM</text><text x="23.4" y="447" font-family="Liberation Sans" font-weight="bold" font-size="11" fill="#0000FF" text-anchor="start" textLength="37.6" lengthAdjust="spacing" >A(dBr)</text><text x="106.5" y="447" font-family="Liberation Sans" font-weight="bold" font-size="11" fill="#0000FF" text-anchor="start" textLength="124.4" lengthAdjust="spacing" >A: Peak Frequency=</text><text x="254.7" y="447" font-family="Liberation Sans" font-weight="bold" font-size="11" fill="#0000FF" text-anchor="start" textLength="53" lengthAdjust="spacing" >999.9962</text><text x="324.5" y="447" font-family="Liberation Sans" font-weight="bold" font-size="11" fill="#0000FF" text-anchor="start" textLength="15.5" lengthAdjust="spacing" >Hz</text><text x="348.6" y="447" font-family="Liberation Sans" font-weight="bold" font-size="11" fill="#0000FF" text-anchor="start" textLength="72.6" lengthAdjust="spacing" >Bandwidth=</text><text x="445.9" y="447" font-family="Liberation Sans" font-weight="bold" font-size="11" fill="#0000FF" text-anchor="start" textLength="51.5" lengthAdjust="spacing" >998.8861</text><text x="516.9" y="447" font-family="Liberation Sans" font-weight="bold" font-size="11" fill="#0000FF" text-anchor="start" textLength="25.1" lengthAdjust="spacing" >Hz ~</text><text x="564.9" y="447" font-family="Liberation Sans" font-weight="bold" font-size="11" fill="#0000FF" text-anchor="start" textLength="57.9" lengthAdjust="spacing" >1.0011063</text><text x="634.5" y="447" font-family="Liberation Sans" font-weight="bold" font-size="11" fill="#0000FF" text-anchor="start" textLength="21.1" lengthAdjust="spacing" >kHz</text></svg>
<svg style="position:absolute;left:0;top:0" width="1024" height="742"><g transform="translate(752.55,142.73) scale(0.6322,0.7835)" fill="none" stroke="#0000FF" stroke-width="7.3" stroke-linecap="round" stroke-linejoin="round"><path vector-effect="non-scaling-stroke" transform="translate(0,0)" d="M30 5C39.66 5 47.5 17.2 47.5 32.25C47.5 47.3 39.66 59.5 30 59.5C20.34 59.5 12.5 47.3 12.5 32.25C12.5 17.2 20.34 5 30 5Z"/><path vector-effect="non-scaling-stroke" transform="translate(120,0)" d="M30 5C39.66 5 47.5 17.2 47.5 32.25C47.5 47.3 39.66 59.5 30 59.5C20.34 59.5 12.5 47.3 12.5 32.25C12.5 17.2 20.34 5 30 5Z"/><path vector-effect="non-scaling-stroke" transform="translate(180,0)" d="M30 5C39.66 5 47.5 17.2 47.5 32.25C47.5 47.3 39.66 59.5 30 59.5C20.34 59.5 12.5 47.3 12.5 32.25C12.5 17.2 20.34 5 30 5Z"/><path vector-effect="non-scaling-stroke" transform="translate(240,0)" d="M17 14L30 5V59.5M15 59.5H45"/><path vector-effect="non-scaling-stroke" transform="translate(300,0)" d="M17 14L30 5V59.5M15 59.5H45"/></g><circle cx="809.44" cy="186.61" r="5.3" fill="#0000FF"/><g transform="translate(752.55,265.54) scale(0.6322,0.7817)" fill="none" stroke="#000" stroke-width="7.3" stroke-linecap="round" stroke-linejoin="round"><path vector-effect="non-scaling-stroke" transform="translate(0,0)" d="M30 5C39.66 5 47.5 17.2 47.5 32.25C47.5 47.3 39.66 59.5 30 59.5C20.34 59.5 12.5 47.3 12.5 32.25C12.5 17.2 20.34 5 30 5Z"/><path vector-effect="non-scaling-stroke" transform="translate(120,0)" d="M30 5C39.66 5 47.5 17.2 47.5 32.25C47.5 47.3 39.66 59.5 30 59.5C20.34 59.5 12.5 47.3 12.5 32.25C12.5 17.2 20.34 5 30 5Z"/><path vector-effect="non-scaling-stroke" transform="translate(180,0)" d="M30 5C39.66 5 47.5 17.2 47.5 32.25C47.5 47.3 39.66 59.5 30 59.5C20.34 59.5 12.5 47.3 12.5 32.25C12.5 17.2 20.34 5 30 5Z"/><path vector-effect="non-scaling-stroke" transform="translate(240,0)" d="M17 14L30 5V59.5M15 59.5H45"/><path vector-effect="non-scaling-stroke" transform="translate(300,0)" d="M17 14L30 5V59.5M15 59.5H45"/></g><circle cx="809.44" cy="309.31" r="5.3" fill="#000"/><g transform="translate(750.59,389.44) scale(0.7346,0.7725)" fill="none" stroke="#000" stroke-width="7.8" stroke-linecap="round" stroke-linejoin="round"><path vector-effect="non-scaling-stroke" transform="translate(0,0)" d="M40 59.5V5L9 46H52M29 59.5H51"/><path vector-effect="non-scaling-stroke" transform="translate(60,0)" d="M47 5H18L15 28C20 25 25 24 30 24C41 24 48 32 48 42C48 52 40 59.5 29 59.5C21 59.5 15 57 11 53"/><path vector-effect="non-scaling-stroke" transform="translate(120,0)" d="M40 59.5V5L9 46H52M29 59.5H51"/><path vector-effect="non-scaling-stroke" transform="translate(240,0)" d="M11 14V5H49L25 59.5"/></g><circle cx="904.86" cy="432.70" r="5.6" fill="#000"/><g transform="translate(754.76,511.66) scale(0.3961,0.8275)" fill="none" stroke="#000" stroke-width="6.2" stroke-linecap="round" stroke-linejoin="round"><path vector-effect="non-scaling-stroke" transform="translate(0,0)" d="M46 22C46 31.4 38.8 39 30 39C21.2 39 14 31.4 14 22C14 12.6 21.2 5 30 5C38.8 5 46 12.6 46 22C46 44 36 59.5 16 59.5"/><path vector-effect="non-scaling-stroke" transform="translate(60,0)" d="M46 22C46 31.4 38.8 39 30 39C21.2 39 14 31.4 14 22C14 12.6 21.2 5 30 5C38.8 5 46 12.6 46 22C46 44 36 59.5 16 59.5"/><path vector-effect="non-scaling-stroke" transform="translate(120,0)" d="M46 22C46 31.4 38.8 39 30 39C21.2 39 14 31.4 14 22C14 12.6 21.2 5 30 5C38.8 5 46 12.6 46 22C46 44 36 59.5 16 59.5"/><path vector-effect="non-scaling-stroke" transform="translate(240,0)" d="M46 22C46 31.4 38.8 39 30 39C21.2 39 14 31.4 14 22C14 12.6 21.2 5 30 5C38.8 5 46 12.6 46 22C46 44 36 59.5 16 59.5"/><path vector-effect="non-scaling-stroke" transform="translate(300,0)" d="M46 22C46 31.4 38.8 39 30 39C21.2 39 14 31.4 14 22C14 12.6 21.2 5 30 5C38.8 5 46 12.6 46 22C46 44 36 59.5 16 59.5"/><path vector-effect="non-scaling-stroke" transform="translate(360,0)" d="M14 42.5C14 33.1 21.2 25.5 30 25.5C38.8 25.5 46 33.1 46 42.5C46 51.9 38.8 59.5 30 59.5C21.2 59.5 14 51.9 14 42.5C14 20.5 24 5 44 5"/><path vector-effect="non-scaling-stroke" transform="translate(420,0)" d="M30 5C37.5 5 43.5 11.3 43.5 19C43.5 26.7 37.5 33 30 33C22.5 33 16.5 26.7 16.5 19C16.5 11.3 22.5 5 30 5ZM30 33C38.8 33 46 38.9 46 46.25C46 53.6 38.8 59.5 30 59.5C21.2 59.5 14 53.6 14 46.25C14 38.9 21.2 33 30 33Z"/><path vector-effect="non-scaling-stroke" transform="translate(540,0)" d="M15 9V59.5M45 9V59.5M15 33H45M7 9H23M37 9H53M7 59.5H23M37 59.5H53"/><path vector-effect="non-scaling-stroke" transform="translate(600,0)" d="M12 28V21H47L12 59.5H48V51"/></g><circle cx="837.93" cy="558.00" r="4" fill="#000"/><g transform="translate(754.76,636.79) scale(0.3961,0.8018)" fill="none" stroke="#0000FF" stroke-width="6.2" stroke-linecap="round" stroke-linejoin="round"><path vector-effect="non-scaling-stroke" transform="translate(0,0)" d="M46 22C46 31.4 38.8 39 30 39C21.2 39 14 31.4 14 22C14 12.6 21.2 5 30 5C38.8 5 46 12.6 46 22C46 44 36 59.5 16 59.5"/><path vector-effect="non-scaling-stroke" transform="translate(60,0)" d="M46 22C46 31.4 38.8 39 30 39C21.2 39 14 31.4 14 22C14 12.6 21.2 5 30 5C38.8 5 46 12.6 46 22C46 44 36 59.5 16 59.5"/><path vector-effect="non-scaling-stroke" transform="translate(120,0)" d="M46 22C46 31.4 38.8 39 30 39C21.2 39 14 31.4 14 22C14 12.6 21.2 5 30 5C38.8 5 46 12.6 46 22C46 44 36 59.5 16 59.5"/><path vector-effect="non-scaling-stroke" transform="translate(240,0)" d="M46 22C46 31.4 38.8 39 30 39C21.2 39 14 31.4 14 22C14 12.6 21.2 5 30 5C38.8 5 46 12.6 46 22C46 44 36 59.5 16 59.5"/><path vector-effect="non-scaling-stroke" transform="translate(300,0)" d="M46 22C46 31.4 38.8 39 30 39C21.2 39 14 31.4 14 22C14 12.6 21.2 5 30 5C38.8 5 46 12.6 46 22C46 44 36 59.5 16 59.5"/><path vector-effect="non-scaling-stroke" transform="translate(360,0)" d="M14 42.5C14 33.1 21.2 25.5 30 25.5C38.8 25.5 46 33.1 46 42.5C46 51.9 38.8 59.5 30 59.5C21.2 59.5 14 51.9 14 42.5C14 20.5 24 5 44 5"/><path vector-effect="non-scaling-stroke" transform="translate(420,0)" d="M13 17C13 10 20 5 30 5C40 5 47 11 47 20C47 30 38 36 28 44L12 59.5H48V52"/><path vector-effect="non-scaling-stroke" transform="translate(540,0)" d="M15 9V59.5M45 9V59.5M15 33H45M7 9H23M37 9H53M7 59.5H23M37 59.5H53"/><path vector-effect="non-scaling-stroke" transform="translate(600,0)" d="M12 28V21H47L12 59.5H48V51"/></g><circle cx="837.93" cy="681.69" r="4" fill="#0000FF"/></svg>
<div style="position:absolute;left:0px;top:714px;width:1024px;height:24px;background:#ECE9D8;"></div>
<div style="position:absolute;left:2px;top:716px;width:3px;height:20px;border-left:1px solid #fff;border-right:1px solid #ACA899;box-sizing:border-box;"></div><div style="position:absolute;left:5px;top:716px;width:3px;height:20px;border-left:1px solid #fff;border-right:1px solid #ACA899;box-sizing:border-box;"></div>
<div style="position:absolute;left:19px;top:719px;white-space:pre;font:bold 13px 'Liberation Sans',sans-serif;color:#000;line-height:15px;">F</div>
<div style="position:absolute;left:31px;top:715px;width:79px;height:22px;background:#fff;border-top:1px solid #ACA899;border-left:1px solid #ACA899;border-right:1px solid #fff;border-bottom:1px solid #fff;box-sizing:border-box;"></div><div style="position:absolute;left:32px;top:716px;width:77px;height:20px;border-top:1px solid #716F64;border-left:1px solid #716F64;border-right:1px solid #F1EFE2;border-bottom:1px solid #F1EFE2;box-sizing:border-box;"></div><div style="position:absolute;left:92px;top:717px;width:16px;height:18px;background:#ECE9D8;border-top:1px solid #F1EFE2;border-left:1px solid #F1EFE2;border-right:1px solid #716F64;border-bottom:1px solid #716F64;box-sizing:border-box;"></div><div style="position:absolute;left:93px;top:718px;width:14px;height:16px;border-top:1px solid #fff;border-left:1px solid #fff;border-right:1px solid #ACA899;border-bottom:1px solid #ACA899;box-sizing:border-box;"></div><div style="position:absolute;left:96px;top:724px;width:0;height:0;border-left:4px solid transparent;border-right:4px solid transparent;border-top:4px solid #000;"></div><div style="position:absolute;left:35px;top:720px;white-space:pre;font:bold 13px 'Liberation Sans',sans-serif;color:#000;line-height:15px;">Auto</div>
<div style="position:absolute;left:112px;top:715px;width:63px;height:22px;background:#fff;border-top:1px solid #ACA899;border-left:1px solid #ACA899;border-right:1px solid #fff;border-bottom:1px solid #fff;box-sizing:border-box;"></div><div style="position:absolute;left:113px;top:716px;width:61px;height:20px;border-top:1px solid #716F64;border-left:1px solid #716F64;border-right:1px solid #F1EFE2;border-bottom:1px solid #F1EFE2;box-sizing:border-box;"></div><div style="position:absolute;left:157px;top:717px;width:16px;height:18px;background:#ECE9D8;border-top:1px solid #F1EFE2;border-left:1px solid #F1EFE2;border-right:1px solid #716F64;border-bottom:1px solid #716F64;box-sizing:border-box;"></div><div style="position:absolute;left:158px;top:718px;width:14px;height:16px;border-top:1px solid #fff;border-left:1px solid #fff;border-right:1px solid #ACA899;border-bottom:1px solid #ACA899;box-sizing:border-box;"></div><div style="position:absolute;left:161px;top:724px;width:0;height:0;border-left:4px solid transparent;border-right:4px solid transparent;border-top:4px solid #000;"></div><div style="position:absolute;left:116px;top:720px;white-space:pre;font:bold 13px 'Liberation Sans',sans-serif;color:#000;line-height:15px;">×1</div>
<div style="position:absolute;left:178px;top:719px;white-space:pre;font:bold 13px 'Liberation Sans',sans-serif;color:#0000FF;line-height:15px;">A</div>
<div style="position:absolute;left:188px;top:715px;width:81px;height:22px;background:#fff;border-top:1px solid #ACA899;border-left:1px solid #ACA899;border-right:1px solid #fff;border-bottom:1px solid #fff;box-sizing:border-box;"></div><div style="position:absolute;left:189px;top:716px;width:79px;height:20px;border-top:1px solid #716F64;border-left:1px solid #716F64;border-right:1px solid #F1EFE2;border-bottom:1px solid #F1EFE2;box-sizing:border-box;"></div><div style="position:absolute;left:251px;top:717px;width:16px;height:18px;background:#ECE9D8;border-top:1px solid #F1EFE2;border-left:1px solid #F1EFE2;border-right:1px solid #716F64;border-bottom:1px solid #716F64;box-sizing:border-box;"></div><div style="position:absolute;left:252px;top:718px;width:14px;height:16px;border-top:1px solid #fff;border-left:1px solid #fff;border-right:1px solid #ACA899;border-bottom:1px solid #ACA899;box-sizing:border-box;"></div><div style="position:absolute;left:255px;top:724px;width:0;height:0;border-left:4px solid transparent;border-right:4px solid transparent;border-top:4px solid #000;"></div><div style="position:absolute;left:192px;top:720px;white-space:pre;font:bold 13px 'Liberation Sans',sans-serif;color:#0000FF;line-height:15px;">-150dB</div>
<div style="position:absolute;left:271px;top:715px;width:58px;height:22px;background:#fff;border-top:1px solid #ACA899;border-left:1px solid #ACA899;border-right:1px solid #fff;border-bottom:1px solid #fff;box-sizing:border-box;"></div><div style="position:absolute;left:272px;top:716px;width:56px;height:20px;border-top:1px solid #716F64;border-left:1px solid #716F64;border-right:1px solid #F1EFE2;border-bottom:1px solid #F1EFE2;box-sizing:border-box;"></div><div style="position:absolute;left:311px;top:717px;width:16px;height:18px;background:#ECE9D8;border-top:1px solid #F1EFE2;border-left:1px solid #F1EFE2;border-right:1px solid #716F64;border-bottom:1px solid #716F64;box-sizing:border-box;"></div><div style="position:absolute;left:312px;top:718px;width:14px;height:16px;border-top:1px solid #fff;border-left:1px solid #fff;border-right:1px solid #ACA899;border-bottom:1px solid #ACA899;box-sizing:border-box;"></div><div style="position:absolute;left:315px;top:724px;width:0;height:0;border-left:4px solid transparent;border-right:4px solid transparent;border-top:4px solid #000;"></div><div style="position:absolute;left:275px;top:720px;white-space:pre;font:bold 13px 'Liberation Sans',sans-serif;color:#0000FF;line-height:15px;">Off</div>
<div style="position:absolute;left:331px;top:719px;white-space:pre;font:bold 13px 'Liberation Sans',sans-serif;color:#000;line-height:15px;">M</div>
<div style="position:absolute;left:344px;top:715px;width:163px;height:22px;background:#fff;border-top:1px solid #ACA899;border-left:1px solid #ACA899;border-right:1px solid #fff;border-bottom:1px solid #fff;box-sizing:border-box;"></div><div style="position:absolute;left:345px;top:716px;width:161px;height:20px;border-top:1px solid #716F64;border-left:1px solid #716F64;border-right:1px solid #F1EFE2;border-bottom:1px solid #F1EFE2;box-sizing:border-box;"></div><div style="position:absolute;left:489px;top:717px;width:16px;height:18px;background:#ECE9D8;border-top:1px solid #F1EFE2;border-left:1px solid #F1EFE2;border-right:1px solid #716F64;border-bottom:1px solid #716F64;box-sizing:border-box;"></div><div style="position:absolute;left:490px;top:718px;width:14px;height:16px;border-top:1px solid #fff;border-left:1px solid #fff;border-right:1px solid #ACA899;border-bottom:1px solid #ACA899;box-sizing:border-box;"></div><div style="position:absolute;left:493px;top:724px;width:0;height:0;border-left:4px solid transparent;border-right:4px solid transparent;border-top:4px solid #000;"></div><div style="position:absolute;left:348px;top:720px;white-space:pre;font:bold 13px 'Liberation Sans',sans-serif;color:#000;line-height:15px;">Amplitude Spectrum</div>
<div style="position:absolute;left:510px;top:719px;white-space:pre;font:bold 13px 'Liberation Sans',sans-serif;color:#FF0000;line-height:15px;">B</div>
<div style="position:absolute;left:520px;top:715px;width:81px;height:22px;background:#fff;border-top:1px solid #ACA899;border-left:1px solid #ACA899;border-right:1px solid #fff;border-bottom:1px solid #fff;box-sizing:border-box;"></div><div style="position:absolute;left:521px;top:716px;width:79px;height:20px;border-top:1px solid #716F64;border-left:1px solid #716F64;border-right:1px solid #F1EFE2;border-bottom:1px solid #F1EFE2;box-sizing:border-box;"></div><div style="position:absolute;left:583px;top:717px;width:16px;height:18px;background:#ECE9D8;border-top:1px solid #F1EFE2;border-left:1px solid #F1EFE2;border-right:1px solid #716F64;border-bottom:1px solid #716F64;box-sizing:border-box;"></div><div style="position:absolute;left:584px;top:718px;width:14px;height:16px;border-top:1px solid #fff;border-left:1px solid #fff;border-right:1px solid #ACA899;border-bottom:1px solid #ACA899;box-sizing:border-box;"></div><div style="position:absolute;left:587px;top:724px;width:0;height:0;border-left:4px solid transparent;border-right:4px solid transparent;border-top:4px solid #ACA899;"></div><div style="position:absolute;left:524px;top:720px;white-space:pre;font:bold 13px 'Liberation Sans',sans-serif;color:#ACA899;line-height:15px;">Off</div>
<div style="position:absolute;left:603px;top:715px;width:59px;height:22px;background:#fff;border-top:1px solid #ACA899;border-left:1px solid #ACA899;border-right:1px solid #fff;border-bottom:1px solid #fff;box-sizing:border-box;"></div><div style="position:absolute;left:604px;top:716px;width:57px;height:20px;border-top:1px solid #716F64;border-left:1px solid #716F64;border-right:1px solid #F1EFE2;border-bottom:1px solid #F1EFE2;box-sizing:border-box;"></div><div style="position:absolute;left:644px;top:717px;width:16px;height:18px;background:#ECE9D8;border-top:1px solid #F1EFE2;border-left:1px solid #F1EFE2;border-right:1px solid #716F64;border-bottom:1px solid #716F64;box-sizing:border-box;"></div><div style="position:absolute;left:645px;top:718px;width:14px;height:16px;border-top:1px solid #fff;border-left:1px solid #fff;border-right:1px solid #ACA899;border-bottom:1px solid #ACA899;box-sizing:border-box;"></div><div style="position:absolute;left:648px;top:724px;width:0;height:0;border-left:4px solid transparent;border-right:4px solid transparent;border-top:4px solid #ACA899;"></div><div style="position:absolute;left:607px;top:720px;white-space:pre;font:bold 13px 'Liberation Sans',sans-serif;color:#ACA899;line-height:15px;">Off</div>
<div style="position:absolute;left:663px;top:719px;white-space:pre;font:bold 13px 'Liberation Sans',sans-serif;color:#000;line-height:15px;">FFT</div>
<div style="position:absolute;left:687px;top:715px;width:82px;height:22px;background:#fff;border-top:1px solid #ACA899;border-left:1px solid #ACA899;border-right:1px solid #fff;border-bottom:1px solid #fff;box-sizing:border-box;"></div><div style="position:absolute;left:688px;top:716px;width:80px;height:20px;border-top:1px solid #716F64;border-left:1px solid #716F64;border-right:1px solid #F1EFE2;border-bottom:1px solid #F1EFE2;box-sizing:border-box;"></div><div style="position:absolute;left:751px;top:717px;width:16px;height:18px;background:#ECE9D8;border-top:1px solid #F1EFE2;border-left:1px solid #F1EFE2;border-right:1px solid #716F64;border-bottom:1px solid #716F64;box-sizing:border-box;"></div><div style="position:absolute;left:752px;top:718px;width:14px;height:16px;border-top:1px solid #fff;border-left:1px solid #fff;border-right:1px solid #ACA899;border-bottom:1px solid #ACA899;box-sizing:border-box;"></div><div style="position:absolute;left:755px;top:724px;width:0;height:0;border-left:4px solid transparent;border-right:4px solid transparent;border-top:4px solid #000;"></div><div style="position:absolute;left:691px;top:720px;white-space:pre;font:bold 13px 'Liberation Sans',sans-serif;color:#000;line-height:15px;">2097152</div>
<div style="position:absolute;left:774px;top:719px;white-space:pre;font:bold 13px 'Liberation Sans',sans-serif;color:#000;line-height:15px;">WND</div>
<div style="position:absolute;left:812px;top:715px;width:143px;height:22px;background:#fff;border-top:1px solid #ACA899;border-left:1px solid #ACA899;border-right:1px solid #fff;border-bottom:1px solid #fff;box-sizing:border-box;"></div><div style="position:absolute;left:813px;top:716px;width:141px;height:20px;border-top:1px solid #716F64;border-left:1px solid #716F64;border-right:1px solid #F1EFE2;border-bottom:1px solid #F1EFE2;box-sizing:border-box;"></div><div style="position:absolute;left:937px;top:717px;width:16px;height:18px;background:#ECE9D8;border-top:1px solid #F1EFE2;border-left:1px solid #F1EFE2;border-right:1px solid #716F64;border-bottom:1px solid #716F64;box-sizing:border-box;"></div><div style="position:absolute;left:938px;top:718px;width:14px;height:16px;border-top:1px solid #fff;border-left:1px solid #fff;border-right:1px solid #ACA899;border-bottom:1px solid #ACA899;box-sizing:border-box;"></div><div style="position:absolute;left:941px;top:724px;width:0;height:0;border-left:4px solid transparent;border-right:4px solid transparent;border-top:4px solid #000;"></div><div style="position:absolute;left:816px;top:720px;white-space:pre;font:bold 13px 'Liberation Sans',sans-serif;color:#000;line-height:15px;">Rectangle</div>
<div style="position:absolute;left:958px;top:715px;width:63px;height:22px;background:#ECE9D8;border-top:1px solid #ACA899;border-left:1px solid #ACA899;border-right:1px solid #fff;border-bottom:1px solid #fff;box-sizing:border-box;"></div><div style="position:absolute;left:959px;top:716px;width:61px;height:20px;border-top:1px solid #716F64;border-left:1px solid #716F64;border-right:1px solid #F1EFE2;border-bottom:1px solid #F1EFE2;box-sizing:border-box;"></div><div style="position:absolute;left:1003px;top:717px;width:16px;height:18px;background:#ECE9D8;border-top:1px solid #F1EFE2;border-left:1px solid #F1EFE2;border-right:1px solid #716F64;border-bottom:1px solid #716F64;box-sizing:border-box;"></div><div style="position:absolute;left:1004px;top:718px;width:14px;height:16px;border-top:1px solid #fff;border-left:1px solid #fff;border-right:1px solid #ACA899;border-bottom:1px solid #ACA899;box-sizing:border-box;"></div><div style="position:absolute;left:1007px;top:724px;width:0;height:0;border-left:4px solid transparent;border-right:4px solid transparent;border-top:4px solid #ACA899;"></div><div style="position:absolute;left:962px;top:720px;white-space:pre;font:bold 13px 'Liberation Sans',sans-serif;color:#ACA899;line-height:15px;">0%</div>
<div style="position:absolute;left:0px;top:738px;width:1024px;height:4px;background:linear-gradient(to bottom,#3168D5 0%,#4993E6 30%,#2157D7 100%);"></div>
<div style="position:absolute;left:0px;top:738px;width:94px;height:4px;background:linear-gradient(to bottom,#3C8A3C 0%,#7DBE7D 40%,#45A045 100%);"></div>
<div style="position:absolute;left:949px;top:738px;width:75px;height:4px;background:linear-gradient(to bottom,#1090E8 0%,#19B9F3 40%,#0F9FE9 100%);border-left:1px solid #1042AF;box-sizing:border-box;"></div>
<svg style="position:absolute;left:0;top:0" width="1024" height="742"><text x="322" y="222.8" font-family="Liberation Sans" font-weight="bold" font-size="20" fill="#E8232B" textLength="341" lengthAdjust="spacing">Free Vibration Decay Curve Method</text><text x="464.6" y="489" font-family="Liberation Sans" font-weight="bold" font-size="20" fill="#E8232B" textLength="188" lengthAdjust="spacing">Half-Power Method</text><path d="M670.5 212.2L753 168M753 168L722.5 172.2M753 168L730 190.6" stroke="#E8232B" stroke-width="4.5" stroke-linecap="round" stroke-linejoin="round" fill="none"/><path d="M551.5 469.5V302.3H750M751 302.3L711.6 292.3M751 302.3L711.6 312.6" stroke="#E8232B" stroke-width="4.2" stroke-linecap="round" stroke-linejoin="miter" fill="none"/></svg>
</div></body></html>
